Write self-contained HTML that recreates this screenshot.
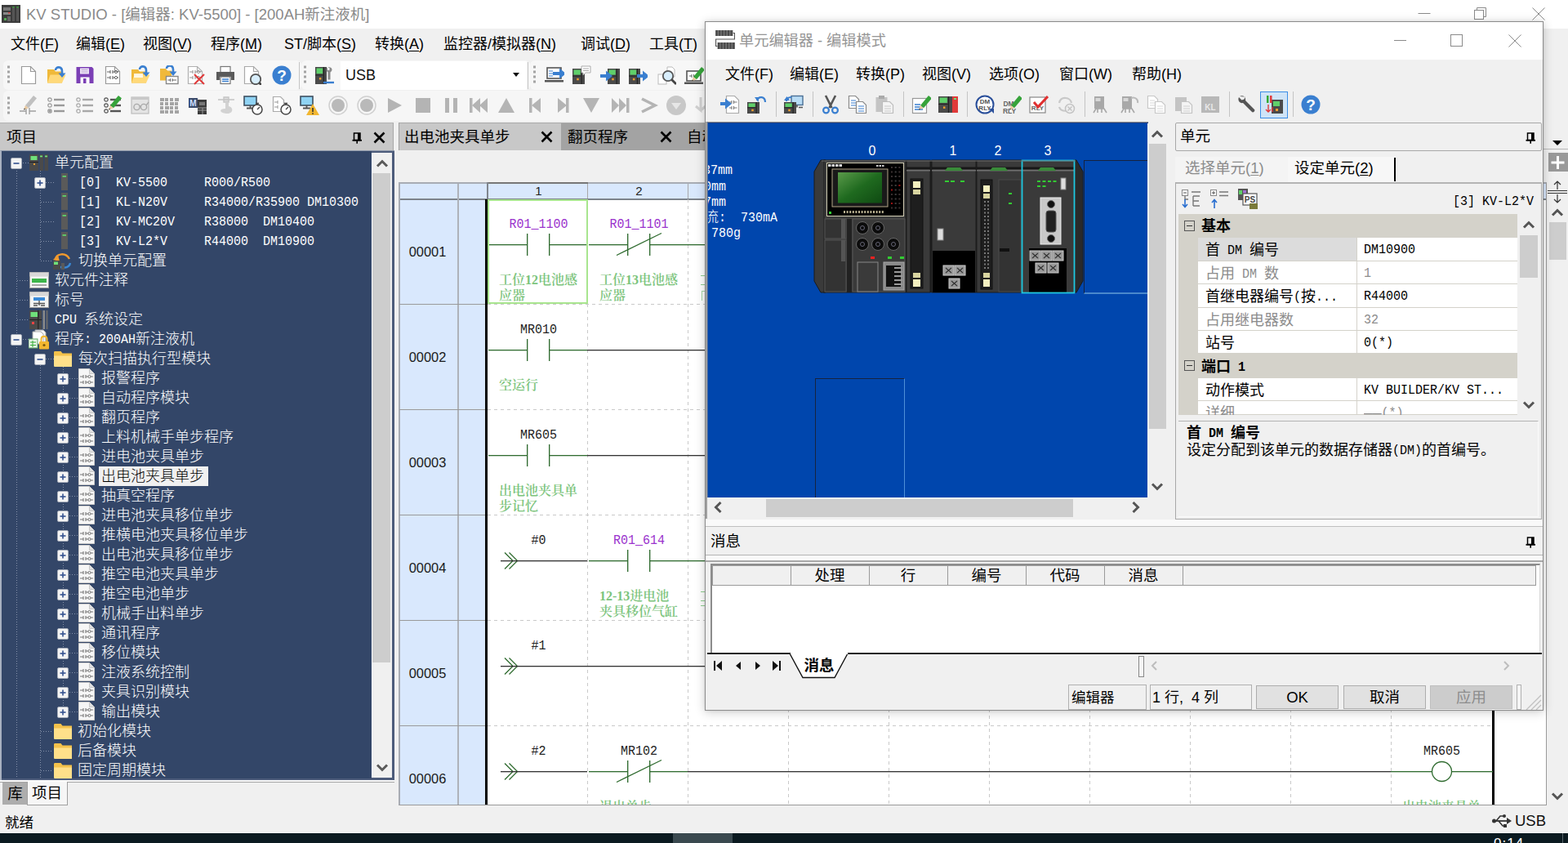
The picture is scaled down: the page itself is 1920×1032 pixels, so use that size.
<!DOCTYPE html>
<html lang="zh-CN"><head><meta charset="utf-8"><title>KV STUDIO</title>
<style>
html,body{margin:0;padding:0;}
body{width:1920px;height:1032px;overflow:hidden;background:#f0f0f0;position:relative;font-family:'Liberation Sans','Noto Sans CJK SC',sans-serif;font-size:18px;}
div,svg{position:absolute;box-sizing:border-box;}
span{white-space:pre;}
.lm{font-family:"Liberation Mono",monospace;font-weight:400;display:inline-block;transform:translateY(1px) scaleY(1.1);transform-origin:50% 62%;}
b .lm,.bd .lm{font-weight:700;}
.cj{position:relative;top:2px;}
.sg{font-family:'Liberation Mono','Noto Sans CJK SC',monospace;}
u{text-decoration:underline;text-underline-offset:2px;}
.tt{font-family:'Liberation Mono','Noto Sans CJK SC',monospace;font-size:18px;line-height:24px;color:#fff;white-space:pre;font-weight:300;}
.pt{font-family:'Liberation Mono','Noto Sans CJK SC',monospace;font-size:18px;white-space:pre;}
.dv{font-family:'Liberation Mono','Noto Sans CJK SC',monospace;font-size:18px;line-height:24px;text-align:center;white-space:pre;}
.cm{font-family:'Liberation Serif','Noto Serif CJK SC',serif;font-size:16px;line-height:18.500px;color:#7cc47c;font-weight:600;white-space:pre;}
</style></head>
<body>
<div style="left:0px;top:0px;width:1920px;height:35px;background:#fff;"></div>
<svg style="left:2px;top:6px;" width="23" height="22" viewBox="0 0 23 22"><rect x="0" y="0" width="23" height="22" fill="#3c3c3c"/><rect x="2" y="3" width="9" height="4" fill="#777"/><rect x="2" y="9" width="9" height="3" fill="#888"/><rect x="13" y="2" width="3" height="18" fill="#555"/><rect x="18" y="2" width="3" height="18" fill="#555"/><rect x="13.500" y="2" width="2" height="1.500" fill="#3a3"/><rect x="18.500" y="2" width="2" height="1.500" fill="#3a3"/><rect x="8" y="9" width="2.500" height="1.500" fill="#c44"/><rect x="3" y="16" width="3" height="3" fill="#5a5"/><rect x="7" y="14" width="4" height="6" fill="#666"/></svg>
<div style="left:32px;top:0px;height:35px;font-size:18.5px;line-height:35px;color:#8a8a8a;white-space:pre;">KV STUDIO - [编辑器: KV-5500] - [200AH新注液机]</div>
<svg style="left:1736px;top:8px;" width="160" height="18" viewBox="0 0 160 18"><g fill="none" stroke="#8a8a8a" stroke-width="1"><path d="M0.5 8.5h15"/><rect x="69.5" y="4.500" width="11" height="11"/><path d="M72.500 4.500v-3h11v11h-3"/><path d="M140.500 1.500l15 15M155.500 1.500l-15 15"/></g></svg>
<div style="left:0px;top:35px;width:1920px;height:38px;background:#f0f0f0;"></div>
<div style="left:13px;top:35px;height:38px;font-size:18px;line-height:38px;color:#000;white-space:pre;">文件(<u>F</u>)</div>
<div style="left:93px;top:35px;height:38px;font-size:18px;line-height:38px;color:#000;white-space:pre;">编辑(<u>E</u>)</div>
<div style="left:175px;top:35px;height:38px;font-size:18px;line-height:38px;color:#000;white-space:pre;">视图(<u>V</u>)</div>
<div style="left:258px;top:35px;height:38px;font-size:18px;line-height:38px;color:#000;white-space:pre;">程序(<u>M</u>)</div>
<div style="left:348px;top:35px;height:38px;font-size:18px;line-height:38px;color:#000;white-space:pre;">ST/脚本(<u>S</u>)</div>
<div style="left:459px;top:35px;height:38px;font-size:18px;line-height:38px;color:#000;white-space:pre;">转换(<u>A</u>)</div>
<div style="left:543px;top:35px;height:38px;font-size:18px;line-height:38px;color:#000;white-space:pre;">监控器/模拟器(<u>N</u>)</div>
<div style="left:711px;top:35px;height:38px;font-size:18px;line-height:38px;color:#000;white-space:pre;">调试(<u>D</u>)</div>
<div style="left:795px;top:35px;height:38px;font-size:18px;line-height:38px;color:#000;white-space:pre;">工具(<u>T</u>)</div>
<div style="left:4px;top:74px;width:365px;height:36px;background:#f7f7f7;border-radius:6px;"></div>
<div style="left:369px;top:74px;width:280px;height:36px;background:#f7f7f7;border-radius:6px;"></div>
<div style="left:649px;top:74px;width:700px;height:36px;background:#f7f7f7;border-radius:6px;"></div>
<div style="left:4px;top:111px;width:1200px;height:37px;background:#f6f6f6;border-radius:6px;"></div>
<svg style="left:9px;top:80px;" width="4" height="22" viewBox="0 0 4 22"><rect x="0" y="0.5" width="3" height="3" fill="#a4a4a4"/><rect x="0" y="6.5" width="3" height="3" fill="#a4a4a4"/><rect x="0" y="12.5" width="3" height="3" fill="#a4a4a4"/><rect x="0" y="18.5" width="3" height="3" fill="#a4a4a4"/></svg>
<svg style="left:372px;top:80px;" width="4" height="22" viewBox="0 0 4 22"><rect x="0" y="0.5" width="3" height="3" fill="#a4a4a4"/><rect x="0" y="6.5" width="3" height="3" fill="#a4a4a4"/><rect x="0" y="12.5" width="3" height="3" fill="#a4a4a4"/><rect x="0" y="18.5" width="3" height="3" fill="#a4a4a4"/></svg>
<svg style="left:653px;top:80px;" width="4" height="22" viewBox="0 0 4 22"><rect x="0" y="0.5" width="3" height="3" fill="#a4a4a4"/><rect x="0" y="6.5" width="3" height="3" fill="#a4a4a4"/><rect x="0" y="12.5" width="3" height="3" fill="#a4a4a4"/><rect x="0" y="18.5" width="3" height="3" fill="#a4a4a4"/></svg>
<svg style="left:9px;top:118px;" width="4" height="22" viewBox="0 0 4 22"><rect x="0" y="0.5" width="3" height="3" fill="#a4a4a4"/><rect x="0" y="6.5" width="3" height="3" fill="#a4a4a4"/><rect x="0" y="12.5" width="3" height="3" fill="#a4a4a4"/><rect x="0" y="18.5" width="3" height="3" fill="#a4a4a4"/></svg>
<div style="left:366px;top:76px;width:1px;height:33px;background:#c4c4c4;"></div>
<div style="left:646px;top:76px;width:1px;height:33px;background:#c4c4c4;"></div>
<svg style="left:23px;top:80px;" width="24" height="24" viewBox="0 0 24 24"><path d="M3.500 1.500h11l6 6v15h-17z" fill="#fff" stroke="#9a9a9a" stroke-width="1.200"/><path d="M14.500 1.500v6h6" fill="none" stroke="#9a9a9a" stroke-width="1.200"/></svg>
<svg style="left:57px;top:80px;" width="24" height="24" viewBox="0 0 24 24"><path d="M1 5h8l2 2.500h8v14h-18z" fill="#f0b93a"/><path d="M1 21.500l3.500-10h19l-4.500 10z" fill="#ffd97a"/><g transform="translate(0,-1)"><path d="M11 7c0-5 8-5 8 1v4" fill="none" stroke="#3a7fd0" stroke-width="2.600"/><path d="M14.500 10.500h9l-4.500 5.500z" fill="#3a7fd0"/></g></svg>
<svg style="left:92px;top:80px;" width="24" height="24" viewBox="0 0 24 24"><path d="M1.500 2h19l2 2v18h-21z" fill="#7b3fb5"/><rect x="6" y="3.500" width="11" height="7" fill="#efe6f7"/><rect x="6.500" y="14.500" width="11" height="7.500" fill="#fff"/><rect x="10" y="16" width="3.500" height="6" fill="#7b3fb5"/><path d="M7.500 5.500h8M7.500 8h8" stroke="#b9a3d0" stroke-width="1"/></svg>
<svg style="left:126px;top:80px;" width="24" height="24" viewBox="0 0 24 24"><path d="M3.500 1.500h11l6 6v15h-17z" fill="#fff" stroke="#9a9a9a" stroke-width="1.200"/><path d="M14.500 1.500v6h6" fill="none" stroke="#9a9a9a" stroke-width="1.200"/><path d="M5 8h4M9 6v4M12 6v4M12 8h3M17 8h2" stroke="#666" stroke-width="1.100" fill="none"/><circle cx="16" cy="8" r="1.600" fill="none" stroke="#666" stroke-width="1"/><path d="M5 15h4M9 13v4M12 13v4M12 15h3M17 15h2" stroke="#666" stroke-width="1.100" fill="none"/><circle cx="16" cy="15" r="1.600" fill="none" stroke="#666" stroke-width="1"/></svg>
<svg style="left:160px;top:80px;" width="24" height="24" viewBox="0 0 24 24"><path d="M1 5h8l2 2.500h8v14h-18z" fill="#f0b93a"/><path d="M1 21.500l3.500-10h19l-4.500 10z" fill="#ffd97a"/><g transform="translate(0,-2)"><path d="M11 7c0-5 8-5 8 1v4" fill="none" stroke="#3a7fd0" stroke-width="2.600"/><path d="M14.500 10.500h9l-4.500 5.500z" fill="#3a7fd0"/></g><rect x="4" y="10" width="11" height="5" fill="#fff" opacity=".8"/></svg>
<svg style="left:195px;top:80px;" width="24" height="24" viewBox="0 0 24 24"><path d="M1 4h7l2 2.500h5v12h-14z" fill="#f0b93a"/><g transform="translate(-2,-3)"><path d="M11 7c0-5 8-5 8 1v4" fill="none" stroke="#3a7fd0" stroke-width="2.600"/><path d="M14.500 10.500h9l-4.500 5.500z" fill="#3a7fd0"/></g><rect x="8.500" y="13.500" width="14.500" height="9" fill="#fff" stroke="#888" stroke-width="1.400"/><path d="M10.500 18h3M13.500 16.200v3.600M16 16.200v3.600M16 18h5" stroke="#666" stroke-width="1" fill="none"/></svg>
<svg style="left:227px;top:80px;" width="24" height="24" viewBox="0 0 24 24"><path d="M3.500 1.500h11l6 6v15h-17z" fill="#fff" stroke="#b0b0b0" stroke-width="1.200"/><path d="M14.500 1.500v6h6" fill="none" stroke="#b0b0b0" stroke-width="1.200"/><path d="M5 8h4M9 6v4M12 6v4M12 8h3M17 8h2" stroke="#999" stroke-width="1.100" fill="none"/><circle cx="16" cy="8" r="1.600" fill="none" stroke="#999" stroke-width="1"/><path d="M5 15h4M9 13v4M12 13v4M12 15h3M17 15h2" stroke="#999" stroke-width="1.100" fill="none"/><circle cx="16" cy="15" r="1.600" fill="none" stroke="#999" stroke-width="1"/><path d="M11 11l12 12M23 11l-12 12" stroke="#e03a3a" stroke-width="2"/></svg>
<svg style="left:264px;top:80px;" width="24" height="24" viewBox="0 0 24 24"><rect x="6" y="1.500" width="12" height="7" fill="#fff" stroke="#777" stroke-width="1.200"/><path d="M1 8h22v10h-4v-4h-14v4h-4z" fill="#5a5a5a"/><rect x="6" y="14" width="12" height="8.500" fill="#fff" stroke="#777" stroke-width="1.200"/><path d="M8 17h8M8 19.500h8" stroke="#3a7fd0" stroke-width="1.400"/></svg>
<svg style="left:296px;top:80px;" width="24" height="24" viewBox="0 0 24 24"><path d="M3.500 1.500h11l6 6v15h-17z" fill="#fff" stroke="#aaa" stroke-width="1.200"/><path d="M14.500 1.500v6h6" fill="none" stroke="#aaa" stroke-width="1.200"/><g transform="translate(8,8)"><circle cx="9" cy="9" r="6.200" fill="#d8eefc" stroke="#555" stroke-width="1.800"/><path d="M13.500 13.500l5.500 5.500" stroke="#444" stroke-width="2.800"/></g></svg>
<svg style="left:333px;top:80px;" width="24" height="24" viewBox="0 0 24 24"><circle cx="12" cy="12" r="11.500" fill="#3a7fd0"/><text x="12" y="18.500" font-family="Liberation Sans,sans-serif" font-size="19" font-weight="bold" fill="#fff" text-anchor="middle">?</text></svg>
<svg style="left:386px;top:80px;" width="24" height="24" viewBox="0 0 24 24"><rect x="0" y="2" width="14" height="21" fill="#4a4a4a"/><rect x="1.5" y="3.5" width="7.700000000000001" height="6.72" fill="#5fd06a"/><rect x="9.799999999999999" y="2" width="1.200" height="21" fill="#222"/><rect x="4.8999999999999995" y="15.02" width="2.500" height="2.500" fill="#f0a030"/><rect x="0" y="11.450000000000001" width="9.799999999999999" height="1" fill="#222"/><path d="M15 3c3-2 7 1 5 4l-1.500 1.500v9h-3v-9l-1.500-1.500c-1-1.500-0.500-3 1-4v3h2.500v-3" fill="#8a8a8a"/><path d="M10 21h13" stroke="#3a7fd0" stroke-width="2.400"/></svg>
<svg style="left:667px;top:80px;" width="24" height="24" viewBox="0 0 24 24"><rect x="3" y="3" width="17" height="13" fill="#fff" stroke="#555" stroke-width="1.600"/><path d="M0 18h23v2.500h-23z" fill="#555"/><path d="M5 7h5M5 10h5M5 13h5" stroke="#3a7fd0" stroke-width="1.200"/><path d="M10 8h8v-4.500l8 6.500l-8 6.500v-4.500h-8z" fill="#3a7fd0"/></svg>
<svg style="left:700px;top:80px;" width="24" height="24" viewBox="0 0 24 24"><rect x="1" y="4" width="15" height="19" fill="#4a4a4a"/><rect x="2.5" y="5.5" width="8.25" height="6.08" fill="#5fd06a"/><rect x="11.5" y="4" width="1.200" height="19" fill="#222"/><rect x="6.25" y="15.78" width="2.500" height="2.500" fill="#f0a030"/><rect x="1" y="12.55" width="10.5" height="1" fill="#222"/><path d="M12 1h11v8h-6l-3 3v-3h-2z" fill="#fff" stroke="#aaa" stroke-width="1"/><path d="M14 4h7M14 6.500h7" stroke="#aaa" stroke-width="1"/></svg>
<svg style="left:735px;top:80px;" width="24" height="24" viewBox="0 0 24 24"><rect x="9" y="4" width="15" height="19" fill="#4a4a4a"/><rect x="10.5" y="5.5" width="8.25" height="6.08" fill="#5fd06a"/><rect x="19.5" y="4" width="1.200" height="19" fill="#222"/><rect x="14.25" y="15.78" width="2.500" height="2.500" fill="#f0a030"/><rect x="9" y="12.55" width="10.5" height="1" fill="#222"/><path d="M0 11h7v-4.500l8 6.500l-8 6.500v-4.500h-7z" fill="#3a7fd0"/></svg>
<svg style="left:769px;top:80px;" width="24" height="24" viewBox="0 0 24 24"><rect x="1" y="4" width="14" height="19" fill="#4a4a4a"/><rect x="2.5" y="5.5" width="7.700000000000001" height="6.08" fill="#5fd06a"/><rect x="10.799999999999999" y="4" width="1.200" height="19" fill="#222"/><rect x="5.8999999999999995" y="15.78" width="2.500" height="2.500" fill="#f0a030"/><rect x="1" y="12.55" width="9.799999999999999" height="1" fill="#222"/><path d="M11 11h7v-4.500l8 6.500l-8 6.500v-4.500h-7z" fill="#3a7fd0"/></svg>
<svg style="left:804px;top:80px;" width="24" height="24" viewBox="0 0 24 24"><path d="M13 2h6l3 3v9h-9z" fill="#fff" stroke="#bbb" stroke-width="1"/><rect x="2" y="11" width="10" height="12" fill="#fff" stroke="#bbb" stroke-width="1"/><g transform="translate(5,4)"><circle cx="9" cy="9" r="6.200" fill="#d8eefc" stroke="#555" stroke-width="1.800"/><path d="M13.500 13.500l5.500 5.500" stroke="#444" stroke-width="2.800"/></g></svg>
<svg style="left:838px;top:80px;" width="24" height="24" viewBox="0 0 24 24"><rect x="3" y="7" width="17" height="12" fill="#fff" stroke="#555" stroke-width="1.600"/><path d="M0 20.500h23v2.500h-23z" fill="#555"/><path d="M6 13h3M9 11v4M11.500 11v4" stroke="#666" stroke-width="1"/><g transform="translate(8,-1)"><path d="M3 15l10-12l4 3.200l-10 12z" fill="#36a33a"/><path d="M3 15l4 3.200l-6 2.300z" fill="#e8c9a0"/><path d="M1 20.500l2.200-.8l-1.400-1.200z" fill="#333"/></g></svg>
<svg style="left:23px;top:117px;" width="24" height="24" viewBox="0 0 24 24"><path d="M1 19h8M9 15v8M13 15v8M13 19h8" stroke="#a0a0a0" stroke-width="1.400" fill="none"/><g transform="translate(5,-3)"><path d="M3 15l10-12l4 3.200l-10 12z" fill="#c0c0c0"/><path d="M3 15l4 3.200l-6 2.300z" fill="#e8c9a0"/><path d="M1 20.500l2.200-.8l-1.400-1.200z" fill="#333"/></g></svg>
<svg style="left:57px;top:117px;" width="24" height="24" viewBox="0 0 24 24"><circle cx="4" cy="5" r="2.200" fill="none" stroke="#9a9a9a" stroke-width="1.200"/><rect x="9" y="3.8" width="13" height="2.400" fill="#9a9a9a"/><circle cx="4" cy="12" r="2.200" fill="none" stroke="#9a9a9a" stroke-width="1.200"/><rect x="9" y="10.8" width="13" height="2.400" fill="#9a9a9a"/><circle cx="4" cy="19" r="2.200" fill="none" stroke="#9a9a9a" stroke-width="1.200"/><rect x="9" y="17.8" width="13" height="2.400" fill="#9a9a9a"/><path d="M2 17l4 4M6 17l-4 4" stroke="#9a9a9a" stroke-width="1.200"/></svg>
<svg style="left:92px;top:117px;" width="24" height="24" viewBox="0 0 24 24"><circle cx="4" cy="5" r="2.200" fill="none" stroke="#a8a8a8" stroke-width="1.200"/><rect x="9" y="3.8" width="13" height="2.400" fill="#a8a8a8"/><circle cx="4" cy="12" r="2.200" fill="none" stroke="#a8a8a8" stroke-width="1.200"/><rect x="9" y="10.8" width="13" height="2.400" fill="#a8a8a8"/><circle cx="4" cy="19" r="2.200" fill="none" stroke="#a8a8a8" stroke-width="1.200"/><rect x="9" y="17.8" width="13" height="2.400" fill="#a8a8a8"/></svg>
<svg style="left:126px;top:117px;" width="24" height="24" viewBox="0 0 24 24"><circle cx="4" cy="5" r="2.200" fill="none" stroke="#555" stroke-width="1.200"/><rect x="9" y="3.8" width="13" height="2.400" fill="#555"/><circle cx="4" cy="12" r="2.200" fill="none" stroke="#555" stroke-width="1.200"/><rect x="9" y="10.8" width="13" height="2.400" fill="#555"/><circle cx="4" cy="19" r="2.200" fill="none" stroke="#555" stroke-width="1.200"/><rect x="9" y="17.8" width="13" height="2.400" fill="#555"/><g transform="translate(6,-3)"><path d="M3 15l10-12l4 3.200l-10 12z" fill="#36a33a"/><path d="M3 15l4 3.200l-6 2.300z" fill="#e8c9a0"/><path d="M1 20.500l2.200-.8l-1.400-1.200z" fill="#333"/></g></svg>
<svg style="left:160px;top:117px;" width="24" height="24" viewBox="0 0 24 24"><rect x="1" y="2" width="21" height="20" fill="#e4e4e4" stroke="#bdbdbd" stroke-width="1.200"/><rect x="1" y="2" width="21" height="3" fill="#c8c8c8"/><circle cx="7.500" cy="14" r="3.600" fill="none" stroke="#aaa" stroke-width="1.400"/><circle cx="16" cy="14" r="3.600" fill="none" stroke="#aaa" stroke-width="1.400"/><path d="M11 13h1.500M19 12l3-4" stroke="#aaa" stroke-width="1.300"/></svg>
<svg style="left:195px;top:117px;" width="24" height="24" viewBox="0 0 24 24"><rect x="1" y="3" width="5" height="4" fill="#a4a4a4"/><rect x="7" y="3" width="4" height="4" fill="#a4a4a4"/><rect x="13" y="3" width="4" height="4" fill="#a4a4a4"/><rect x="19" y="3" width="5" height="4" fill="#a4a4a4"/><rect x="1" y="8" width="4" height="4" fill="#a4a4a4"/><rect x="7" y="8" width="4" height="4" fill="#a4a4a4"/><rect x="13" y="8" width="5" height="4" fill="#a4a4a4"/><rect x="19" y="8" width="4" height="4" fill="#a4a4a4"/><rect x="1" y="13" width="4" height="4" fill="#a4a4a4"/><rect x="7" y="13" width="5" height="4" fill="#a4a4a4"/><rect x="13" y="13" width="4" height="4" fill="#a4a4a4"/><rect x="19" y="13" width="4" height="4" fill="#a4a4a4"/><rect x="1" y="18" width="5" height="4" fill="#a4a4a4"/><rect x="7" y="18" width="4" height="4" fill="#a4a4a4"/><rect x="13" y="18" width="4" height="4" fill="#a4a4a4"/><rect x="19" y="18" width="5" height="4" fill="#a4a4a4"/></svg>
<svg style="left:230px;top:117px;" width="24" height="24" viewBox="0 0 24 24"><rect x="1" y="3" width="11" height="12" fill="#3a4a6a"/><text x="6.500" y="13" font-family="Liberation Sans,sans-serif" font-size="10" font-weight="bold" fill="#cfe0ff" text-anchor="middle">M</text><rect x="12" y="5" width="11" height="18" fill="#3c3c3c"/><rect x="14" y="8" width="7" height="4" fill="#777"/><path d="M12 15h11M12 18h11M18 15v8" stroke="#999" stroke-width="1"/></svg>
<svg style="left:265px;top:117px;" width="24" height="24" viewBox="0 0 24 24"><path d="M2 5h20M9 2h6v6h-6z" stroke="#c4c4c4" stroke-width="1.400" fill="#ddd"/><path d="M11 8v8c-4 0-6 1-6 3c2 3 12 5 14 0c1-2 0-5-4-6v-5z" fill="#d2d2d2"/></svg>
<svg style="left:298px;top:117px;" width="24" height="24" viewBox="0 0 24 24"><rect x="1" y="1" width="15" height="11" fill="#8fd3f4" stroke="#3d4f60" stroke-width="1.600"/><path d="M8.500 12v3M4 15.500h9" stroke="#555" stroke-width="1.800"/><g transform="translate(10,8)"><circle cx="7" cy="9" r="6" fill="#fff" stroke="#444" stroke-width="1.500"/><path d="M7 9l3-3M5 1.500h4M7 1.500v2" stroke="#444" stroke-width="1.400" fill="none"/></g></svg>
<svg style="left:333px;top:117px;" width="24" height="24" viewBox="0 0 24 24"><path d="M1.500 1.500h9l4 4v14h-13z" fill="#fff" stroke="#aaa" stroke-width="1.200"/><path d="M3 8h4M7 6v4M3 14h4M7 12v4" stroke="#999" stroke-width="1"/><g transform="translate(10,8)"><circle cx="7" cy="9" r="6" fill="#fff" stroke="#444" stroke-width="1.500"/><path d="M7 9l3-3M5 1.500h4M7 1.500v2" stroke="#444" stroke-width="1.400" fill="none"/></g></svg>
<svg style="left:367px;top:117px;" width="24" height="24" viewBox="0 0 24 24"><rect x="1" y="1" width="15" height="11" fill="#8fd3f4" stroke="#3d4f60" stroke-width="1.600"/><path d="M8.500 12v3M4 15.500h9" stroke="#555" stroke-width="1.800"/><g transform="translate(8,10)"><path d="M8 0l8 14h-16z" fill="#f2b731"/><path d="M8 5v5M8 11.200v1.600" stroke="#333" stroke-width="1.600"/></g></svg>
<svg style="left:402px;top:117px;" width="24" height="24" viewBox="0 0 24 24"><circle cx="12" cy="12" r="11" fill="none" stroke="#d0d0d0" stroke-width="1.500"/><circle cx="12" cy="12" r="8" fill="#b9b9b9"/></svg>
<svg style="left:437px;top:117px;" width="24" height="24" viewBox="0 0 24 24"><circle cx="12" cy="12" r="11" fill="none" stroke="#d0d0d0" stroke-width="1.500"/><circle cx="12" cy="12" r="8" fill="#b9b9b9"/></svg>
<svg style="left:472px;top:117px;" width="24" height="24" viewBox="0 0 24 24"><path d="M3 3l17 9l-17 9z" fill="#b4b4b4"/></svg>
<svg style="left:506px;top:117px;" width="24" height="24" viewBox="0 0 24 24"><rect x="3" y="3" width="18" height="18" fill="#b4b4b4"/></svg>
<svg style="left:541px;top:117px;" width="24" height="24" viewBox="0 0 24 24"><rect x="4" y="3" width="5" height="18" fill="#b4b4b4"/><rect x="14" y="3" width="5" height="18" fill="#b4b4b4"/></svg>
<svg style="left:574px;top:117px;" width="24" height="24" viewBox="0 0 24 24"><rect x="1" y="3" width="3.500" height="18" fill="#b4b4b4"/><path d="M14 3v18l-10-9zM23 3v18l-10-9z" fill="#b4b4b4"/></svg>
<svg style="left:608px;top:117px;" width="24" height="24" viewBox="0 0 24 24"><path d="M12 3l10 18h-20z" fill="#b4b4b4"/></svg>
<svg style="left:645px;top:117px;" width="24" height="24" viewBox="0 0 24 24"><rect x="3" y="3" width="3.500" height="18" fill="#b4b4b4"/><path d="M17 3v18l-11-9z" fill="#b4b4b4"/></svg>
<svg style="left:679px;top:117px;" width="24" height="24" viewBox="0 0 24 24"><rect x="14" y="3" width="3.500" height="18" fill="#b4b4b4"/><path d="M4 3v18l11-9z" fill="#b4b4b4"/></svg>
<svg style="left:712px;top:117px;" width="24" height="24" viewBox="0 0 24 24"><path d="M12 21l10-18h-20z" fill="#b4b4b4"/></svg>
<svg style="left:747px;top:117px;" width="24" height="24" viewBox="0 0 24 24"><rect x="20" y="3" width="3.500" height="18" fill="#b4b4b4"/><path d="M2 3v18l9-9zM11 3v18l9-9z" fill="#b4b4b4"/></svg>
<svg style="left:782px;top:117px;" width="24" height="24" viewBox="0 0 24 24"><path d="M4 4l16 8l-16 8" fill="none" stroke="#b4b4b4" stroke-width="3.600"/></svg>
<svg style="left:816px;top:117px;" width="24" height="24" viewBox="0 0 24 24"><circle cx="12" cy="12" r="12" fill="#c8c8c8"/><path d="M6 9h12l-6 8z" fill="#e6e6e6"/></svg>
<svg style="left:850px;top:117px;" width="24" height="24" viewBox="0 0 24 24"><path d="M8 2v16l-6-5M8 18l6-5" stroke="#d0d0d0" stroke-width="3" fill="none"/></svg>
<div style="left:417px;top:75px;width:228px;height:35px;background:#fff;"></div>
<div style="left:423px;top:75px;height:35px;font-size:18px;line-height:35px;color:#111;white-space:pre;">USB</div>
<svg style="left:628px;top:89px;" width="10" height="6" viewBox="0 0 10 6"><path d="M0 0h8l-4 5z" fill="#111"/></svg>
<div style="left:0px;top:150px;width:482px;height:34px;background:#c8c8c8;border-top:1px solid #b4b4b4;border-right:1px solid #a8a8a8;"></div>
<div style="left:8px;top:151px;height:34px;font-size:18.5px;line-height:34px;color:#000;white-space:pre;">项目</div>
<svg style="left:431px;top:162px;" width="13" height="14" viewBox="0 0 13 14"><path d="M2.500 1h7.500v8.500h-7.500z" fill="none" stroke="#000" stroke-width="1.500"/><rect x="7" y="1" width="3" height="8.500" fill="#000"/><path d="M0.500 9.800h11.500" stroke="#000" stroke-width="1.800"/><path d="M6.200 10v3.800" stroke="#000" stroke-width="1.600"/></svg>
<svg style="left:457px;top:161px;" width="15" height="15" viewBox="0 0 15 15"><path d="M1.500 1.500l12 12M13.500 1.500l-12 12" stroke="#000" stroke-width="2.600" fill="none"/></svg>
<div style="left:0px;top:184px;width:483px;height:771px;background:#4d5c7b;border-left:2px solid #a8b0c0;border-top:1px solid #8d97aa;"></div>
<div class="tree" style="left:2px;top:185px;width:453px;height:768px;background:#334668;overflow:hidden;"></div>
<div style="left:455px;top:187px;width:25px;height:765px;background:#f0f0f0;border-left:1px solid #fafcff;"></div>
<div style="left:456px;top:212px;width:22px;height:599px;background:#cdcdcd;"></div>
<svg style="left:460px;top:195px;" width="16" height="10" viewBox="0 0 16 10"><path d="M2 8.500l6-6l6 6" stroke="#5a5a5a" stroke-width="3" fill="none"/></svg>
<svg style="left:460px;top:935px;" width="16" height="10" viewBox="0 0 16 10"><path d="M2 1.500l6 6l6-6" stroke="#5a5a5a" stroke-width="3" fill="none"/></svg>
<div style="left:0px;top:955px;width:483px;height:2px;background:#fafafa;"></div>
<div style="left:0px;top:957px;width:483px;height:1px;background:#a4a4a4;"></div>
<div style="left:3px;top:958px;width:31px;height:27px;background:#adadad;"></div>
<div style="left:3px;top:958px;height:27px;font-size:18.5px;line-height:27px;color:#000;white-space:pre;width:31px;text-align:center;">库</div>
<div style="left:33px;top:957px;width:50px;height:29px;background:#f6f6f6;border:1px solid #a0a0a0;border-top:none;"></div>
<div style="left:33px;top:957px;height:28px;font-size:18.5px;line-height:28px;color:#000;white-space:pre;width:49px;text-align:center;">项目</div>
<div style="left:0px;top:986px;width:1920px;height:34px;background:#f0f0f0;"></div>
<div style="left:6px;top:992px;height:32px;font-size:17.5px;line-height:32px;color:#000;white-space:pre;font-family:'Liberation Mono','Noto Sans CJK SC',monospace;">就绪</div>
<svg style="left:1826px;top:995px;" width="26" height="20" viewBox="0 0 26 20"><g fill="#333" stroke="#333"><path d="M2 10h20" stroke-width="1.800" fill="none"/><path d="M19 6l6 4l-6 4z" stroke="none"/><circle cx="3.500" cy="10" r="2.500" stroke="none"/><path d="M6 10l5-6h5" fill="none" stroke-width="1.600"/><circle cx="16" cy="4" r="2" stroke="none"/><path d="M9 10l5 6h3" fill="none" stroke-width="1.600"/><rect x="15" y="14" width="4" height="4" stroke="none"/></g></svg>
<div style="left:1855px;top:988px;height:34px;font-size:18.5px;line-height:34px;color:#111;white-space:pre;">USB</div>
<div style="left:0px;top:1019px;width:1920px;height:1px;background:#fcfcfc;"></div>
<div style="left:0px;top:1020px;width:1920px;height:12px;background:#0b1a20;"></div>
<div style="left:824px;top:1020px;width:73px;height:12px;background:#3a494f;"></div>
<div style="left:1913px;top:1020px;width:1px;height:12px;background:#5a666c;"></div>
<div style="left:1829px;top:1022px;height:22px;font-size:17px;line-height:22px;color:#fff;white-space:pre;letter-spacing:1px;">0:14</div>
<div style="left:20px;top:206px;width:1px;height:749px;background:repeating-linear-gradient(180deg,#8490a8 0 1px,transparent 1px 3px);"></div>
<div style="left:49px;top:206px;width:1px;height:114px;background:repeating-linear-gradient(180deg,#8490a8 0 1px,transparent 1px 3px);"></div>
<div style="left:56px;top:223px;width:10px;height:1px;background:repeating-linear-gradient(90deg,#8490a8 0 1px,transparent 1px 3px);"></div>
<div style="left:50px;top:247px;width:16px;height:1px;background:repeating-linear-gradient(90deg,#8490a8 0 1px,transparent 1px 3px);"></div>
<div style="left:50px;top:271px;width:16px;height:1px;background:repeating-linear-gradient(90deg,#8490a8 0 1px,transparent 1px 3px);"></div>
<div style="left:50px;top:295px;width:16px;height:1px;background:repeating-linear-gradient(90deg,#8490a8 0 1px,transparent 1px 3px);"></div>
<div style="left:50px;top:319px;width:14px;height:1px;background:repeating-linear-gradient(90deg,#8490a8 0 1px,transparent 1px 3px);"></div>
<div style="left:21px;top:343px;width:14px;height:1px;background:repeating-linear-gradient(90deg,#8490a8 0 1px,transparent 1px 3px);"></div>
<div style="left:21px;top:367px;width:14px;height:1px;background:repeating-linear-gradient(90deg,#8490a8 0 1px,transparent 1px 3px);"></div>
<div style="left:21px;top:391px;width:14px;height:1px;background:repeating-linear-gradient(90deg,#8490a8 0 1px,transparent 1px 3px);"></div>
<div style="left:28px;top:199px;width:8px;height:1px;background:repeating-linear-gradient(90deg,#8490a8 0 1px,transparent 1px 3px);"></div>
<div style="left:28px;top:415px;width:8px;height:1px;background:repeating-linear-gradient(90deg,#8490a8 0 1px,transparent 1px 3px);"></div>
<div style="left:49px;top:447px;width:1px;height:508px;background:repeating-linear-gradient(180deg,#8490a8 0 1px,transparent 1px 3px);"></div>
<div style="left:56px;top:439px;width:10px;height:1px;background:repeating-linear-gradient(90deg,#8490a8 0 1px,transparent 1px 3px);"></div>
<div style="left:77px;top:449px;width:1px;height:422px;background:repeating-linear-gradient(180deg,#8490a8 0 1px,transparent 1px 3px);"></div>
<div style="left:85px;top:463px;width:10px;height:1px;background:repeating-linear-gradient(90deg,#8490a8 0 1px,transparent 1px 3px);"></div>
<div style="left:85px;top:487px;width:10px;height:1px;background:repeating-linear-gradient(90deg,#8490a8 0 1px,transparent 1px 3px);"></div>
<div style="left:85px;top:511px;width:10px;height:1px;background:repeating-linear-gradient(90deg,#8490a8 0 1px,transparent 1px 3px);"></div>
<div style="left:85px;top:535px;width:10px;height:1px;background:repeating-linear-gradient(90deg,#8490a8 0 1px,transparent 1px 3px);"></div>
<div style="left:85px;top:559px;width:10px;height:1px;background:repeating-linear-gradient(90deg,#8490a8 0 1px,transparent 1px 3px);"></div>
<div style="left:85px;top:583px;width:10px;height:1px;background:repeating-linear-gradient(90deg,#8490a8 0 1px,transparent 1px 3px);"></div>
<div style="left:85px;top:607px;width:10px;height:1px;background:repeating-linear-gradient(90deg,#8490a8 0 1px,transparent 1px 3px);"></div>
<div style="left:85px;top:631px;width:10px;height:1px;background:repeating-linear-gradient(90deg,#8490a8 0 1px,transparent 1px 3px);"></div>
<div style="left:85px;top:655px;width:10px;height:1px;background:repeating-linear-gradient(90deg,#8490a8 0 1px,transparent 1px 3px);"></div>
<div style="left:85px;top:679px;width:10px;height:1px;background:repeating-linear-gradient(90deg,#8490a8 0 1px,transparent 1px 3px);"></div>
<div style="left:85px;top:703px;width:10px;height:1px;background:repeating-linear-gradient(90deg,#8490a8 0 1px,transparent 1px 3px);"></div>
<div style="left:85px;top:727px;width:10px;height:1px;background:repeating-linear-gradient(90deg,#8490a8 0 1px,transparent 1px 3px);"></div>
<div style="left:85px;top:751px;width:10px;height:1px;background:repeating-linear-gradient(90deg,#8490a8 0 1px,transparent 1px 3px);"></div>
<div style="left:85px;top:775px;width:10px;height:1px;background:repeating-linear-gradient(90deg,#8490a8 0 1px,transparent 1px 3px);"></div>
<div style="left:85px;top:799px;width:10px;height:1px;background:repeating-linear-gradient(90deg,#8490a8 0 1px,transparent 1px 3px);"></div>
<div style="left:85px;top:823px;width:10px;height:1px;background:repeating-linear-gradient(90deg,#8490a8 0 1px,transparent 1px 3px);"></div>
<div style="left:85px;top:847px;width:10px;height:1px;background:repeating-linear-gradient(90deg,#8490a8 0 1px,transparent 1px 3px);"></div>
<div style="left:85px;top:871px;width:10px;height:1px;background:repeating-linear-gradient(90deg,#8490a8 0 1px,transparent 1px 3px);"></div>
<div style="left:50px;top:895px;width:15px;height:1px;background:repeating-linear-gradient(90deg,#8490a8 0 1px,transparent 1px 3px);"></div>
<div style="left:50px;top:919px;width:15px;height:1px;background:repeating-linear-gradient(90deg,#8490a8 0 1px,transparent 1px 3px);"></div>
<div style="left:50px;top:943px;width:15px;height:1px;background:repeating-linear-gradient(90deg,#8490a8 0 1px,transparent 1px 3px);"></div>
<svg style="left:13px;top:193px;" width="14" height="14" viewBox="0 0 14 14"><rect x="0.500" y="0.500" width="13" height="13" rx="1.500" fill="#f4f4f4" stroke="#a6adba" stroke-width="1"/><path d="M3.500 7h7" stroke="#33508f" stroke-width="1.600"/></svg>
<svg style="left:36px;top:188px;" width="24" height="22" viewBox="0 0 24 22"><rect x="0" y="1" width="11" height="20" fill="#4a4a4a"/><rect x="1.500" y="3" width="8" height="5" fill="#6fe07a"/><rect x="5" y="12" width="2" height="2" fill="#f0a030"/><rect x="0" y="10" width="11" height="1" fill="#222"/><rect x="12.500" y="1" width="4.500" height="20" fill="#4a4a4a"/><rect x="18.500" y="1" width="4.500" height="20" fill="#4a4a4a"/><rect x="13" y="2.500" width="3" height="1.800" fill="#6fe07a"/><rect x="19" y="2.500" width="3" height="1.800" fill="#6fe07a"/></svg>
<div class="tt" style="left:67px;top:186px;"><span class="cj">单元配置</span></div>
<svg style="left:42px;top:217px;" width="14" height="14" viewBox="0 0 14 14"><rect x="0.500" y="0.500" width="13" height="13" rx="1.500" fill="#f4f4f4" stroke="#a6adba" stroke-width="1"/><path d="M3.500 7h7" stroke="#33508f" stroke-width="1.600"/><path d="M7 3.500v7" stroke="#33508f" stroke-width="1.600"/></svg>
<svg style="left:75px;top:212px;" width="8" height="22" viewBox="0 0 8 22"><rect x="0" y="0" width="8" height="21" fill="#5a5a5a"/><rect x="1.500" y="3" width="4.500" height="1.800" fill="#5fd06a"/></svg>
<div class="tt" style="left:97px;top:210px;"><span class="lm" style="font-size:15.0px">[0]  KV-5500     R000/R500</span></div>
<svg style="left:75px;top:236px;" width="8" height="22" viewBox="0 0 8 22"><rect x="0" y="0" width="8" height="21" fill="#5a5a5a"/><rect x="1.500" y="3" width="4.500" height="1.800" fill="#5fd06a"/></svg>
<div class="tt" style="left:97px;top:234px;"><span class="lm" style="font-size:15.0px">[1]  KL-N20V     R34000/R35900 DM10300</span></div>
<svg style="left:75px;top:260px;" width="8" height="22" viewBox="0 0 8 22"><rect x="0" y="0" width="8" height="21" fill="#5a5a5a"/><rect x="1.500" y="3" width="4.500" height="1.800" fill="#5fd06a"/></svg>
<div class="tt" style="left:97px;top:258px;"><span class="lm" style="font-size:15.0px">[2]  KV-MC20V    R38000  DM10400</span></div>
<svg style="left:75px;top:284px;" width="8" height="22" viewBox="0 0 8 22"><rect x="0" y="0" width="8" height="21" fill="#5a5a5a"/><rect x="1.500" y="3" width="4.500" height="1.800" fill="#5fd06a"/></svg>
<div class="tt" style="left:97px;top:282px;"><span class="lm" style="font-size:15.0px">[3]  KV-L2*V     R44000  DM10900</span></div>
<svg style="left:64px;top:308px;" width="26" height="24" viewBox="0 0 26 24"><path d="M4 9c1-6 12-9 17 0" fill="none" stroke="#f29a2e" stroke-width="2.400"/><path d="M1 10l6-6l2 8z" fill="#f29a2e"/><path d="M22 14c-1 6-12 9-17 0" fill="none" stroke="#3a8ad8" stroke-width="2.400"/><rect x="1" y="11" width="9" height="11" fill="#4a4a4a"/><rect x="2" y="12.500" width="5" height="3.500" fill="#6fe07a"/><rect x="11" y="14" width="4" height="8" fill="#5a5a5a"/></svg>
<div class="tt" style="left:96px;top:306px;"><span class="cj">切换单元配置</span></div>
<svg style="left:36px;top:333px;" width="24" height="22" viewBox="0 0 24 22"><rect x="0.500" y="0.500" width="23" height="19" fill="#f4f4f4" stroke="#9a9a9a"/><rect x="0.500" y="0.500" width="23" height="5" fill="#d8d8d8"/><rect x="3" y="8" width="18" height="5" fill="#3cb54a"/><path d="M3 16h18" stroke="#888" stroke-width="1.400"/></svg>
<div class="tt" style="left:67px;top:330px;"><span class="cj">软元件注释</span></div>
<svg style="left:36px;top:357px;" width="24" height="22" viewBox="0 0 24 22"><rect x="0.500" y="0.500" width="23" height="19" fill="#f4f4f4" stroke="#9a9a9a"/><rect x="0.500" y="0.500" width="23" height="5" fill="#d8d8d8"/><rect x="5" y="7" width="14" height="4" fill="#3a8ad8"/><path d="M12 11v6M5 14.500h14M5 17h5M14 17h5" stroke="#555" stroke-width="1.400" fill="none"/></svg>
<div class="tt" style="left:67px;top:354px;"><span class="cj">标号</span></div>
<svg style="left:36px;top:380px;" width="24" height="23" viewBox="0 0 24 23"><rect x="0" y="0" width="15" height="23" fill="#4a4a4a"/><rect x="1.500" y="2" width="9" height="6" fill="#6fe07a"/><rect x="0" y="11" width="15" height="1" fill="#222"/><rect x="3" y="14" width="3" height="3" fill="#e44"/><rect x="16.500" y="0" width="2.500" height="23" fill="#8a8a8a"/><rect x="20.500" y="0" width="2" height="23" fill="#6a6a6a"/><rect x="10" y="0" width="1.500" height="23" fill="#2a2a2a"/></svg>
<div class="tt" style="left:67px;top:378px;"><span class="lm" style="font-size:15.0px">CPU </span><span class="cj">系统设定</span></div>
<svg style="left:13px;top:409px;" width="14" height="14" viewBox="0 0 14 14"><rect x="0.500" y="0.500" width="13" height="13" rx="1.500" fill="#f4f4f4" stroke="#a6adba" stroke-width="1"/><path d="M3.500 7h7" stroke="#33508f" stroke-width="1.600"/></svg>
<svg style="left:35px;top:403px;" width="26" height="25" viewBox="0 0 26 25"><path d="M8 1h10l3 3v12h-13z" fill="#f4f4f4" stroke="#aaa"/><path d="M5 3h10l3 3v12h-13z" fill="#fff" stroke="#aaa"/><rect x="0" y="12" width="11" height="11" fill="#e8f4e8" stroke="#6a6"/><path d="M2 16h7M2 19.500h7M5 14v8" stroke="#3a3" stroke-width="1"/><rect x="13" y="15" width="12" height="9.500" rx="1" fill="#f2b731"/><path d="M15.500 15v-3c0-4.500 7-4.500 7 0v3" fill="none" stroke="#f2b731" stroke-width="2"/><circle cx="19" cy="19.500" r="1.600" fill="#7a5a10"/></svg>
<div class="tt" style="left:67px;top:402px;"><span class="cj">程序</span><span class="lm" style="font-size:15.0px">: 200AH</span><span class="cj">新注液机</span></div>
<svg style="left:42px;top:433px;" width="14" height="14" viewBox="0 0 14 14"><rect x="0.500" y="0.500" width="13" height="13" rx="1.500" fill="#f4f4f4" stroke="#a6adba" stroke-width="1"/><path d="M3.500 7h7" stroke="#33508f" stroke-width="1.600"/></svg>
<svg style="left:66px;top:429px;" width="22" height="20" viewBox="0 0 22 20"><path d="M0 2.500c0-1 .5-1.500 1.500-1.500h7l2 2.500h11c1 0 1.500.5 1.500 1.500v14h-23z" fill="#f3c14b"/><path d="M0 6.500h23v12c0 1-.5 1.500-1.500 1.500h-20c-1 0-1.500-.5-1.500-1.500z" fill="#ffe08a"/></svg>
<div class="tt" style="left:96px;top:426px;"><span class="cj">每次扫描执行型模块</span></div>
<svg style="left:70px;top:457px;" width="14" height="14" viewBox="0 0 14 14"><rect x="0.500" y="0.500" width="13" height="13" rx="1.500" fill="#f4f4f4" stroke="#a6adba" stroke-width="1"/><path d="M3.500 7h7" stroke="#33508f" stroke-width="1.600"/><path d="M7 3.500v7" stroke="#33508f" stroke-width="1.600"/></svg>
<svg style="left:96px;top:451px;" width="20" height="23" viewBox="0 0 20 23"><path d="M0.500 0.500h13l6 6v16h-19z" fill="#f6f6f6" stroke="#c8c8c8"/><path d="M13.500 0.500v6h6" fill="#e0e0e0" stroke="#c8c8c8"/><path d="M2 10h4M6 8v4M9 8v4M9 10h3M15 10h3M2 17h4M6 15v4M9 15v4M9 17h3M15 17h3" stroke="#777" stroke-width="1.100" fill="none"/><circle cx="13.500" cy="10" r="1.600" fill="none" stroke="#777"/><circle cx="13.500" cy="17" r="1.600" fill="none" stroke="#777"/></svg>
<div class="tt" style="left:124px;top:450px;"><span class="cj">报警程序</span></div>
<svg style="left:70px;top:481px;" width="14" height="14" viewBox="0 0 14 14"><rect x="0.500" y="0.500" width="13" height="13" rx="1.500" fill="#f4f4f4" stroke="#a6adba" stroke-width="1"/><path d="M3.500 7h7" stroke="#33508f" stroke-width="1.600"/><path d="M7 3.500v7" stroke="#33508f" stroke-width="1.600"/></svg>
<svg style="left:96px;top:475px;" width="20" height="23" viewBox="0 0 20 23"><path d="M0.500 0.500h13l6 6v16h-19z" fill="#f6f6f6" stroke="#c8c8c8"/><path d="M13.500 0.500v6h6" fill="#e0e0e0" stroke="#c8c8c8"/><path d="M2 10h4M6 8v4M9 8v4M9 10h3M15 10h3M2 17h4M6 15v4M9 15v4M9 17h3M15 17h3" stroke="#777" stroke-width="1.100" fill="none"/><circle cx="13.500" cy="10" r="1.600" fill="none" stroke="#777"/><circle cx="13.500" cy="17" r="1.600" fill="none" stroke="#777"/></svg>
<div class="tt" style="left:124px;top:474px;"><span class="cj">自动程序模块</span></div>
<svg style="left:70px;top:505px;" width="14" height="14" viewBox="0 0 14 14"><rect x="0.500" y="0.500" width="13" height="13" rx="1.500" fill="#f4f4f4" stroke="#a6adba" stroke-width="1"/><path d="M3.500 7h7" stroke="#33508f" stroke-width="1.600"/><path d="M7 3.500v7" stroke="#33508f" stroke-width="1.600"/></svg>
<svg style="left:96px;top:499px;" width="20" height="23" viewBox="0 0 20 23"><path d="M0.500 0.500h13l6 6v16h-19z" fill="#f6f6f6" stroke="#c8c8c8"/><path d="M13.500 0.500v6h6" fill="#e0e0e0" stroke="#c8c8c8"/><path d="M2 10h4M6 8v4M9 8v4M9 10h3M15 10h3M2 17h4M6 15v4M9 15v4M9 17h3M15 17h3" stroke="#777" stroke-width="1.100" fill="none"/><circle cx="13.500" cy="10" r="1.600" fill="none" stroke="#777"/><circle cx="13.500" cy="17" r="1.600" fill="none" stroke="#777"/></svg>
<div class="tt" style="left:124px;top:498px;"><span class="cj">翻页程序</span></div>
<svg style="left:70px;top:529px;" width="14" height="14" viewBox="0 0 14 14"><rect x="0.500" y="0.500" width="13" height="13" rx="1.500" fill="#f4f4f4" stroke="#a6adba" stroke-width="1"/><path d="M3.500 7h7" stroke="#33508f" stroke-width="1.600"/><path d="M7 3.500v7" stroke="#33508f" stroke-width="1.600"/></svg>
<svg style="left:96px;top:523px;" width="20" height="23" viewBox="0 0 20 23"><path d="M0.500 0.500h13l6 6v16h-19z" fill="#f6f6f6" stroke="#c8c8c8"/><path d="M13.500 0.500v6h6" fill="#e0e0e0" stroke="#c8c8c8"/><path d="M2 10h4M6 8v4M9 8v4M9 10h3M15 10h3M2 17h4M6 15v4M9 15v4M9 17h3M15 17h3" stroke="#777" stroke-width="1.100" fill="none"/><circle cx="13.500" cy="10" r="1.600" fill="none" stroke="#777"/><circle cx="13.500" cy="17" r="1.600" fill="none" stroke="#777"/></svg>
<div class="tt" style="left:124px;top:522px;"><span class="cj">上料机械手单步程序</span></div>
<svg style="left:70px;top:553px;" width="14" height="14" viewBox="0 0 14 14"><rect x="0.500" y="0.500" width="13" height="13" rx="1.500" fill="#f4f4f4" stroke="#a6adba" stroke-width="1"/><path d="M3.500 7h7" stroke="#33508f" stroke-width="1.600"/><path d="M7 3.500v7" stroke="#33508f" stroke-width="1.600"/></svg>
<svg style="left:96px;top:547px;" width="20" height="23" viewBox="0 0 20 23"><path d="M0.500 0.500h13l6 6v16h-19z" fill="#f6f6f6" stroke="#c8c8c8"/><path d="M13.500 0.500v6h6" fill="#e0e0e0" stroke="#c8c8c8"/><path d="M2 10h4M6 8v4M9 8v4M9 10h3M15 10h3M2 17h4M6 15v4M9 15v4M9 17h3M15 17h3" stroke="#777" stroke-width="1.100" fill="none"/><circle cx="13.500" cy="10" r="1.600" fill="none" stroke="#777"/><circle cx="13.500" cy="17" r="1.600" fill="none" stroke="#777"/></svg>
<div class="tt" style="left:124px;top:546px;"><span class="cj">进电池夹具单步</span></div>
<svg style="left:70px;top:577px;" width="14" height="14" viewBox="0 0 14 14"><rect x="0.500" y="0.500" width="13" height="13" rx="1.500" fill="#f4f4f4" stroke="#a6adba" stroke-width="1"/><path d="M3.500 7h7" stroke="#33508f" stroke-width="1.600"/><path d="M7 3.500v7" stroke="#33508f" stroke-width="1.600"/></svg>
<svg style="left:96px;top:571px;" width="20" height="23" viewBox="0 0 20 23"><path d="M0.500 0.500h13l6 6v16h-19z" fill="#f6f6f6" stroke="#c8c8c8"/><path d="M13.500 0.500v6h6" fill="#e0e0e0" stroke="#c8c8c8"/><path d="M2 10h4M6 8v4M9 8v4M9 10h3M15 10h3M2 17h4M6 15v4M9 15v4M9 17h3M15 17h3" stroke="#777" stroke-width="1.100" fill="none"/><circle cx="13.500" cy="10" r="1.600" fill="none" stroke="#777"/><circle cx="13.500" cy="17" r="1.600" fill="none" stroke="#777"/></svg>
<div style="left:121px;top:571px;width:134px;height:24px;background:#f0f0f0;"></div>
<div class="tt" style="left:124px;top:570px;color:#000;"><span class="cj">出电池夹具单步</span></div>
<svg style="left:70px;top:601px;" width="14" height="14" viewBox="0 0 14 14"><rect x="0.500" y="0.500" width="13" height="13" rx="1.500" fill="#f4f4f4" stroke="#a6adba" stroke-width="1"/><path d="M3.500 7h7" stroke="#33508f" stroke-width="1.600"/><path d="M7 3.500v7" stroke="#33508f" stroke-width="1.600"/></svg>
<svg style="left:96px;top:595px;" width="20" height="23" viewBox="0 0 20 23"><path d="M0.500 0.500h13l6 6v16h-19z" fill="#f6f6f6" stroke="#c8c8c8"/><path d="M13.500 0.500v6h6" fill="#e0e0e0" stroke="#c8c8c8"/><path d="M2 10h4M6 8v4M9 8v4M9 10h3M15 10h3M2 17h4M6 15v4M9 15v4M9 17h3M15 17h3" stroke="#777" stroke-width="1.100" fill="none"/><circle cx="13.500" cy="10" r="1.600" fill="none" stroke="#777"/><circle cx="13.500" cy="17" r="1.600" fill="none" stroke="#777"/></svg>
<div class="tt" style="left:124px;top:594px;"><span class="cj">抽真空程序</span></div>
<svg style="left:70px;top:625px;" width="14" height="14" viewBox="0 0 14 14"><rect x="0.500" y="0.500" width="13" height="13" rx="1.500" fill="#f4f4f4" stroke="#a6adba" stroke-width="1"/><path d="M3.500 7h7" stroke="#33508f" stroke-width="1.600"/><path d="M7 3.500v7" stroke="#33508f" stroke-width="1.600"/></svg>
<svg style="left:96px;top:619px;" width="20" height="23" viewBox="0 0 20 23"><path d="M0.500 0.500h13l6 6v16h-19z" fill="#f6f6f6" stroke="#c8c8c8"/><path d="M13.500 0.500v6h6" fill="#e0e0e0" stroke="#c8c8c8"/><path d="M2 10h4M6 8v4M9 8v4M9 10h3M15 10h3M2 17h4M6 15v4M9 15v4M9 17h3M15 17h3" stroke="#777" stroke-width="1.100" fill="none"/><circle cx="13.500" cy="10" r="1.600" fill="none" stroke="#777"/><circle cx="13.500" cy="17" r="1.600" fill="none" stroke="#777"/></svg>
<div class="tt" style="left:124px;top:618px;"><span class="cj">进电池夹具移位单步</span></div>
<svg style="left:70px;top:649px;" width="14" height="14" viewBox="0 0 14 14"><rect x="0.500" y="0.500" width="13" height="13" rx="1.500" fill="#f4f4f4" stroke="#a6adba" stroke-width="1"/><path d="M3.500 7h7" stroke="#33508f" stroke-width="1.600"/><path d="M7 3.500v7" stroke="#33508f" stroke-width="1.600"/></svg>
<svg style="left:96px;top:643px;" width="20" height="23" viewBox="0 0 20 23"><path d="M0.500 0.500h13l6 6v16h-19z" fill="#f6f6f6" stroke="#c8c8c8"/><path d="M13.500 0.500v6h6" fill="#e0e0e0" stroke="#c8c8c8"/><path d="M2 10h4M6 8v4M9 8v4M9 10h3M15 10h3M2 17h4M6 15v4M9 15v4M9 17h3M15 17h3" stroke="#777" stroke-width="1.100" fill="none"/><circle cx="13.500" cy="10" r="1.600" fill="none" stroke="#777"/><circle cx="13.500" cy="17" r="1.600" fill="none" stroke="#777"/></svg>
<div class="tt" style="left:124px;top:642px;"><span class="cj">推横电池夹具移位单步</span></div>
<svg style="left:70px;top:673px;" width="14" height="14" viewBox="0 0 14 14"><rect x="0.500" y="0.500" width="13" height="13" rx="1.500" fill="#f4f4f4" stroke="#a6adba" stroke-width="1"/><path d="M3.500 7h7" stroke="#33508f" stroke-width="1.600"/><path d="M7 3.500v7" stroke="#33508f" stroke-width="1.600"/></svg>
<svg style="left:96px;top:667px;" width="20" height="23" viewBox="0 0 20 23"><path d="M0.500 0.500h13l6 6v16h-19z" fill="#f6f6f6" stroke="#c8c8c8"/><path d="M13.500 0.500v6h6" fill="#e0e0e0" stroke="#c8c8c8"/><path d="M2 10h4M6 8v4M9 8v4M9 10h3M15 10h3M2 17h4M6 15v4M9 15v4M9 17h3M15 17h3" stroke="#777" stroke-width="1.100" fill="none"/><circle cx="13.500" cy="10" r="1.600" fill="none" stroke="#777"/><circle cx="13.500" cy="17" r="1.600" fill="none" stroke="#777"/></svg>
<div class="tt" style="left:124px;top:666px;"><span class="cj">出电池夹具移位单步</span></div>
<svg style="left:70px;top:697px;" width="14" height="14" viewBox="0 0 14 14"><rect x="0.500" y="0.500" width="13" height="13" rx="1.500" fill="#f4f4f4" stroke="#a6adba" stroke-width="1"/><path d="M3.500 7h7" stroke="#33508f" stroke-width="1.600"/><path d="M7 3.500v7" stroke="#33508f" stroke-width="1.600"/></svg>
<svg style="left:96px;top:691px;" width="20" height="23" viewBox="0 0 20 23"><path d="M0.500 0.500h13l6 6v16h-19z" fill="#f6f6f6" stroke="#c8c8c8"/><path d="M13.500 0.500v6h6" fill="#e0e0e0" stroke="#c8c8c8"/><path d="M2 10h4M6 8v4M9 8v4M9 10h3M15 10h3M2 17h4M6 15v4M9 15v4M9 17h3M15 17h3" stroke="#777" stroke-width="1.100" fill="none"/><circle cx="13.500" cy="10" r="1.600" fill="none" stroke="#777"/><circle cx="13.500" cy="17" r="1.600" fill="none" stroke="#777"/></svg>
<div class="tt" style="left:124px;top:690px;"><span class="cj">推空电池夹具单步</span></div>
<svg style="left:70px;top:721px;" width="14" height="14" viewBox="0 0 14 14"><rect x="0.500" y="0.500" width="13" height="13" rx="1.500" fill="#f4f4f4" stroke="#a6adba" stroke-width="1"/><path d="M3.500 7h7" stroke="#33508f" stroke-width="1.600"/><path d="M7 3.500v7" stroke="#33508f" stroke-width="1.600"/></svg>
<svg style="left:96px;top:715px;" width="20" height="23" viewBox="0 0 20 23"><path d="M0.500 0.500h13l6 6v16h-19z" fill="#f6f6f6" stroke="#c8c8c8"/><path d="M13.500 0.500v6h6" fill="#e0e0e0" stroke="#c8c8c8"/><path d="M2 10h4M6 8v4M9 8v4M9 10h3M15 10h3M2 17h4M6 15v4M9 15v4M9 17h3M15 17h3" stroke="#777" stroke-width="1.100" fill="none"/><circle cx="13.500" cy="10" r="1.600" fill="none" stroke="#777"/><circle cx="13.500" cy="17" r="1.600" fill="none" stroke="#777"/></svg>
<div class="tt" style="left:124px;top:714px;"><span class="cj">推空电池单步</span></div>
<svg style="left:70px;top:745px;" width="14" height="14" viewBox="0 0 14 14"><rect x="0.500" y="0.500" width="13" height="13" rx="1.500" fill="#f4f4f4" stroke="#a6adba" stroke-width="1"/><path d="M3.500 7h7" stroke="#33508f" stroke-width="1.600"/><path d="M7 3.500v7" stroke="#33508f" stroke-width="1.600"/></svg>
<svg style="left:96px;top:739px;" width="20" height="23" viewBox="0 0 20 23"><path d="M0.500 0.500h13l6 6v16h-19z" fill="#f6f6f6" stroke="#c8c8c8"/><path d="M13.500 0.500v6h6" fill="#e0e0e0" stroke="#c8c8c8"/><path d="M2 10h4M6 8v4M9 8v4M9 10h3M15 10h3M2 17h4M6 15v4M9 15v4M9 17h3M15 17h3" stroke="#777" stroke-width="1.100" fill="none"/><circle cx="13.500" cy="10" r="1.600" fill="none" stroke="#777"/><circle cx="13.500" cy="17" r="1.600" fill="none" stroke="#777"/></svg>
<div class="tt" style="left:124px;top:738px;"><span class="cj">机械手出料单步</span></div>
<svg style="left:70px;top:769px;" width="14" height="14" viewBox="0 0 14 14"><rect x="0.500" y="0.500" width="13" height="13" rx="1.500" fill="#f4f4f4" stroke="#a6adba" stroke-width="1"/><path d="M3.500 7h7" stroke="#33508f" stroke-width="1.600"/><path d="M7 3.500v7" stroke="#33508f" stroke-width="1.600"/></svg>
<svg style="left:96px;top:763px;" width="20" height="23" viewBox="0 0 20 23"><path d="M0.500 0.500h13l6 6v16h-19z" fill="#f6f6f6" stroke="#c8c8c8"/><path d="M13.500 0.500v6h6" fill="#e0e0e0" stroke="#c8c8c8"/><path d="M2 10h4M6 8v4M9 8v4M9 10h3M15 10h3M2 17h4M6 15v4M9 15v4M9 17h3M15 17h3" stroke="#777" stroke-width="1.100" fill="none"/><circle cx="13.500" cy="10" r="1.600" fill="none" stroke="#777"/><circle cx="13.500" cy="17" r="1.600" fill="none" stroke="#777"/></svg>
<div class="tt" style="left:124px;top:762px;"><span class="cj">通讯程序</span></div>
<svg style="left:70px;top:793px;" width="14" height="14" viewBox="0 0 14 14"><rect x="0.500" y="0.500" width="13" height="13" rx="1.500" fill="#f4f4f4" stroke="#a6adba" stroke-width="1"/><path d="M3.500 7h7" stroke="#33508f" stroke-width="1.600"/><path d="M7 3.500v7" stroke="#33508f" stroke-width="1.600"/></svg>
<svg style="left:96px;top:787px;" width="20" height="23" viewBox="0 0 20 23"><path d="M0.500 0.500h13l6 6v16h-19z" fill="#f6f6f6" stroke="#c8c8c8"/><path d="M13.500 0.500v6h6" fill="#e0e0e0" stroke="#c8c8c8"/><path d="M2 10h4M6 8v4M9 8v4M9 10h3M15 10h3M2 17h4M6 15v4M9 15v4M9 17h3M15 17h3" stroke="#777" stroke-width="1.100" fill="none"/><circle cx="13.500" cy="10" r="1.600" fill="none" stroke="#777"/><circle cx="13.500" cy="17" r="1.600" fill="none" stroke="#777"/></svg>
<div class="tt" style="left:124px;top:786px;"><span class="cj">移位模块</span></div>
<svg style="left:70px;top:817px;" width="14" height="14" viewBox="0 0 14 14"><rect x="0.500" y="0.500" width="13" height="13" rx="1.500" fill="#f4f4f4" stroke="#a6adba" stroke-width="1"/><path d="M3.500 7h7" stroke="#33508f" stroke-width="1.600"/><path d="M7 3.500v7" stroke="#33508f" stroke-width="1.600"/></svg>
<svg style="left:96px;top:811px;" width="20" height="23" viewBox="0 0 20 23"><path d="M0.500 0.500h13l6 6v16h-19z" fill="#f6f6f6" stroke="#c8c8c8"/><path d="M13.500 0.500v6h6" fill="#e0e0e0" stroke="#c8c8c8"/><path d="M2 10h4M6 8v4M9 8v4M9 10h3M15 10h3M2 17h4M6 15v4M9 15v4M9 17h3M15 17h3" stroke="#777" stroke-width="1.100" fill="none"/><circle cx="13.500" cy="10" r="1.600" fill="none" stroke="#777"/><circle cx="13.500" cy="17" r="1.600" fill="none" stroke="#777"/></svg>
<div class="tt" style="left:124px;top:810px;"><span class="cj">注液系统控制</span></div>
<svg style="left:70px;top:841px;" width="14" height="14" viewBox="0 0 14 14"><rect x="0.500" y="0.500" width="13" height="13" rx="1.500" fill="#f4f4f4" stroke="#a6adba" stroke-width="1"/><path d="M3.500 7h7" stroke="#33508f" stroke-width="1.600"/><path d="M7 3.500v7" stroke="#33508f" stroke-width="1.600"/></svg>
<svg style="left:96px;top:835px;" width="20" height="23" viewBox="0 0 20 23"><path d="M0.500 0.500h13l6 6v16h-19z" fill="#f6f6f6" stroke="#c8c8c8"/><path d="M13.500 0.500v6h6" fill="#e0e0e0" stroke="#c8c8c8"/><path d="M2 10h4M6 8v4M9 8v4M9 10h3M15 10h3M2 17h4M6 15v4M9 15v4M9 17h3M15 17h3" stroke="#777" stroke-width="1.100" fill="none"/><circle cx="13.500" cy="10" r="1.600" fill="none" stroke="#777"/><circle cx="13.500" cy="17" r="1.600" fill="none" stroke="#777"/></svg>
<div class="tt" style="left:124px;top:834px;"><span class="cj">夹具识别模块</span></div>
<svg style="left:70px;top:865px;" width="14" height="14" viewBox="0 0 14 14"><rect x="0.500" y="0.500" width="13" height="13" rx="1.500" fill="#f4f4f4" stroke="#a6adba" stroke-width="1"/><path d="M3.500 7h7" stroke="#33508f" stroke-width="1.600"/><path d="M7 3.500v7" stroke="#33508f" stroke-width="1.600"/></svg>
<svg style="left:96px;top:859px;" width="20" height="23" viewBox="0 0 20 23"><path d="M0.500 0.500h13l6 6v16h-19z" fill="#f6f6f6" stroke="#c8c8c8"/><path d="M13.500 0.500v6h6" fill="#e0e0e0" stroke="#c8c8c8"/><path d="M2 10h4M6 8v4M9 8v4M9 10h3M15 10h3M2 17h4M6 15v4M9 15v4M9 17h3M15 17h3" stroke="#777" stroke-width="1.100" fill="none"/><circle cx="13.500" cy="10" r="1.600" fill="none" stroke="#777"/><circle cx="13.500" cy="17" r="1.600" fill="none" stroke="#777"/></svg>
<div class="tt" style="left:124px;top:858px;"><span class="cj">输出模块</span></div>
<svg style="left:66px;top:885px;" width="22" height="20" viewBox="0 0 22 20"><path d="M0 2.500c0-1 .5-1.500 1.500-1.500h7l2 2.500h11c1 0 1.500.5 1.500 1.500v14h-23z" fill="#f3c14b"/><path d="M0 6.500h23v12c0 1-.5 1.500-1.500 1.500h-20c-1 0-1.500-.5-1.500-1.500z" fill="#ffe08a"/></svg>
<div class="tt" style="left:95px;top:882px;"><span class="cj">初始化模块</span></div>
<svg style="left:66px;top:909px;" width="22" height="20" viewBox="0 0 22 20"><path d="M0 2.500c0-1 .5-1.500 1.500-1.500h7l2 2.500h11c1 0 1.500.5 1.500 1.500v14h-23z" fill="#f3c14b"/><path d="M0 6.500h23v12c0 1-.5 1.500-1.500 1.500h-20c-1 0-1.500-.5-1.500-1.500z" fill="#ffe08a"/></svg>
<div class="tt" style="left:95px;top:906px;"><span class="cj">后备模块</span></div>
<svg style="left:66px;top:933px;" width="22" height="20" viewBox="0 0 22 20"><path d="M0 2.500c0-1 .5-1.500 1.500-1.500h7l2 2.500h11c1 0 1.500.5 1.500 1.500v14h-23z" fill="#f3c14b"/><path d="M0 6.500h23v12c0 1-.5 1.500-1.500 1.500h-20c-1 0-1.500-.5-1.500-1.500z" fill="#ffe08a"/></svg>
<div class="tt" style="left:95px;top:930px;"><span class="cj">固定周期模块</span></div>
<div style="left:2px;top:953px;width:479px;height:2px;background:#4d5c7b;"></div>
<div style="left:488px;top:150px;width:1402px;height:34px;background:#a3a3a3;border-top:1px solid #aaa;border-left:1px solid #a0a0a0;"></div>
<div style="left:489px;top:151px;width:198px;height:33px;background:#c8c8c8;"></div>
<div style="left:495px;top:151px;height:34px;font-size:18.5px;line-height:34px;color:#000;white-space:pre;">出电池夹具单步</div>
<div style="left:695px;top:151px;height:34px;font-size:18.5px;line-height:34px;color:#000;white-space:pre;">翻页程序</div>
<div style="left:841px;top:151px;height:34px;font-size:18.5px;line-height:34px;color:#000;white-space:pre;">自动程序模块</div>
<svg style="left:662px;top:160px;" width="15" height="15" viewBox="0 0 15 15"><path d="M1.500 1.500l12 12M13.500 1.500l-12 12" stroke="#000" stroke-width="2.600" fill="none"/></svg>
<svg style="left:808px;top:160px;" width="15" height="15" viewBox="0 0 15 15"><path d="M1.500 1.500l12 12M13.500 1.500l-12 12" stroke="#000" stroke-width="2.600" fill="none"/></svg>
<div style="left:483px;top:150px;width:5px;height:836px;background:#f0f0f0;"></div>
<div style="left:488px;top:184px;width:1405px;height:40px;background:#f0f0f0;"></div>
<div style="left:488px;top:223px;width:1406px;height:763px;background:#fff;border:1px solid #9a9a9a;border-top:2px solid #a8acb4;border-left:2px solid #a8acb4;"></div>
<div style="left:490px;top:225px;width:1403px;height:20px;background:#d9e8fd;border-bottom:2px solid #7d838b;"></div>
<div style="left:719px;top:225px;width:1px;height:18px;background:#a8a8a8;"></div>
<div style="left:842px;top:225px;width:1px;height:18px;background:#a8a8a8;"></div>
<div style="left:965px;top:225px;width:1px;height:18px;background:#a8a8a8;"></div>
<div style="left:1088px;top:225px;width:1px;height:18px;background:#a8a8a8;"></div>
<div style="left:1211px;top:225px;width:1px;height:18px;background:#a8a8a8;"></div>
<div style="left:1334px;top:225px;width:1px;height:18px;background:#a8a8a8;"></div>
<div style="left:1457px;top:225px;width:1px;height:18px;background:#a8a8a8;"></div>
<div style="left:1580px;top:225px;width:1px;height:18px;background:#a8a8a8;"></div>
<div style="left:1703px;top:225px;width:1px;height:18px;background:#a8a8a8;"></div>
<div style="left:1826px;top:225px;width:1px;height:18px;background:#a8a8a8;"></div>
<div style="left:598px;top:224px;height:19px;font-size:15px;line-height:19px;color:#222;white-space:pre;font-family:'Liberation Sans',sans-serif;width:123px;text-align:center;">1</div>
<div style="left:721px;top:224px;height:19px;font-size:15px;line-height:19px;color:#222;white-space:pre;font-family:'Liberation Sans',sans-serif;width:123px;text-align:center;">2</div>
<div style="left:844px;top:224px;height:19px;font-size:15px;line-height:19px;color:#222;white-space:pre;font-family:'Liberation Sans',sans-serif;width:123px;text-align:center;">3</div>
<div style="left:967px;top:224px;height:19px;font-size:15px;line-height:19px;color:#222;white-space:pre;font-family:'Liberation Sans',sans-serif;width:123px;text-align:center;">4</div>
<div style="left:1090px;top:224px;height:19px;font-size:15px;line-height:19px;color:#222;white-space:pre;font-family:'Liberation Sans',sans-serif;width:123px;text-align:center;">5</div>
<div style="left:1213px;top:224px;height:19px;font-size:15px;line-height:19px;color:#222;white-space:pre;font-family:'Liberation Sans',sans-serif;width:123px;text-align:center;">6</div>
<div style="left:1336px;top:224px;height:19px;font-size:15px;line-height:19px;color:#222;white-space:pre;font-family:'Liberation Sans',sans-serif;width:123px;text-align:center;">7</div>
<div style="left:1459px;top:224px;height:19px;font-size:15px;line-height:19px;color:#222;white-space:pre;font-family:'Liberation Sans',sans-serif;width:123px;text-align:center;">8</div>
<div style="left:1582px;top:224px;height:19px;font-size:15px;line-height:19px;color:#222;white-space:pre;font-family:'Liberation Sans',sans-serif;width:123px;text-align:center;">9</div>
<div style="left:1705px;top:224px;height:19px;font-size:15px;line-height:19px;color:#222;white-space:pre;font-family:'Liberation Sans',sans-serif;width:123px;text-align:center;">10</div>
<div style="left:596px;top:223px;width:124px;height:2px;background:#777;"></div>
<div style="left:596px;top:223px;width:2px;height:20px;background:#80868e;"></div>
<div style="left:490px;top:245px;width:105px;height:740px;background:#d9e8fd;"></div>
<div style="left:560px;top:225px;width:2px;height:760px;background:#aeb2ba;"></div>
<div style="left:489px;top:372px;width:106px;height:1px;background:#9a9a9a;"></div>
<div style="left:489px;top:501px;width:106px;height:1px;background:#9a9a9a;"></div>
<div style="left:489px;top:630px;width:106px;height:1px;background:#9a9a9a;"></div>
<div style="left:489px;top:759px;width:106px;height:1px;background:#9a9a9a;"></div>
<div style="left:489px;top:888px;width:106px;height:1px;background:#9a9a9a;"></div>
<div style="left:488px;top:296px;height:24px;font-size:16.4px;line-height:24px;color:#1a1a1a;white-space:pre;font-family:'Liberation Sans',sans-serif;width:71px;text-align:center;">00001</div>
<div style="left:488px;top:425px;height:24px;font-size:16.4px;line-height:24px;color:#1a1a1a;white-space:pre;font-family:'Liberation Sans',sans-serif;width:71px;text-align:center;">00002</div>
<div style="left:488px;top:554px;height:24px;font-size:16.4px;line-height:24px;color:#1a1a1a;white-space:pre;font-family:'Liberation Sans',sans-serif;width:71px;text-align:center;">00003</div>
<div style="left:488px;top:683px;height:24px;font-size:16.4px;line-height:24px;color:#1a1a1a;white-space:pre;font-family:'Liberation Sans',sans-serif;width:71px;text-align:center;">00004</div>
<div style="left:488px;top:812px;height:24px;font-size:16.4px;line-height:24px;color:#1a1a1a;white-space:pre;font-family:'Liberation Sans',sans-serif;width:71px;text-align:center;">00005</div>
<div style="left:488px;top:941px;height:24px;font-size:16.4px;line-height:24px;color:#1a1a1a;white-space:pre;font-family:'Liberation Sans',sans-serif;width:71px;text-align:center;">00006</div>
<div style="left:594px;top:244px;width:3px;height:741px;background:#000;"></div>
<div style="left:1827px;top:243px;width:3px;height:742px;background:#000;"></div>
<svg style="left:597px;top:244px" width="1231" height="741" viewBox="0 0 1231 741"><g stroke="#c9c9c9" stroke-width="1" stroke-dasharray="4 4" fill="none"><path d="M122.5 0V741"/><path d="M245.5 0V741"/><path d="M368.5 0V741"/><path d="M491.5 0V741"/><path d="M614.5 0V741"/><path d="M737.5 0V741"/><path d="M860.5 0V741"/><path d="M983.5 0V741"/><path d="M1106.5 0V741"/><path d="M0 128.5H1231"/><path d="M0 257.5H1231"/><path d="M0 386.5H1231"/><path d="M0 515.5H1231"/><path d="M0 644.5H1231"/></g></svg>
<div style="left:598px;top:299px;width:47px;height:1px;background:#2f6b2f;box-shadow:0 1px 0 rgba(47,107,47,.3);"></div>
<div style="left:672px;top:299px;width:47px;height:1px;background:#2f6b2f;box-shadow:0 1px 0 rgba(47,107,47,.3);"></div>
<div style="left:645px;top:286px;width:1px;height:27px;background:#2f6b2f;box-shadow:1px 0 0 rgba(47,107,47,.35);"></div>
<div style="left:672px;top:286px;width:1px;height:27px;background:#2f6b2f;box-shadow:1px 0 0 rgba(47,107,47,.35);"></div>
<div class="dv" style="left:598px;top:261px;width:123px;color:#9a32cd;"><span class="lm" style="font-size:15.0px">R01_1100</span></div>
<div class="cm" style="left:611px;top:334px;">工位12电池感<br>应器</div>
<div style="left:721px;top:299px;width:47px;height:1px;background:#2f6b2f;box-shadow:0 1px 0 rgba(47,107,47,.3);"></div>
<div style="left:795px;top:299px;width:47px;height:1px;background:#2f6b2f;box-shadow:0 1px 0 rgba(47,107,47,.3);"></div>
<div style="left:768px;top:286px;width:1px;height:27px;background:#2f6b2f;box-shadow:1px 0 0 rgba(47,107,47,.35);"></div>
<div style="left:795px;top:286px;width:1px;height:27px;background:#2f6b2f;box-shadow:1px 0 0 rgba(47,107,47,.35);"></div>
<svg style="left:754px;top:284px;" width="58" height="30" viewBox="0 0 58 30"><path d="M1 28.500L56 1.500" stroke="#2f6b2f" stroke-width="1.300" fill="none"/></svg>
<div class="dv" style="left:721px;top:261px;width:123px;color:#9a32cd;"><span class="lm" style="font-size:15.0px">R01_1101</span></div>
<div class="cm" style="left:734px;top:334px;">工位13电池感<br>应器</div>
<div style="left:858px;top:337px;width:6px;height:1px;background:#8fcf8f;"></div>
<div style="left:858px;top:348px;width:6px;height:1px;background:#8fcf8f;"></div>
<div style="left:859px;top:356px;width:1px;height:12px;background:#a8d8a8;"></div>
<div style="left:860px;top:356px;width:3px;height:1px;background:#a8d8a8;"></div>
<div style="left:842px;top:299px;width:28px;height:1px;background:#2f6b2f;box-shadow:0 1px 0 rgba(47,107,47,.3);"></div>
<div style="left:598px;top:428px;width:47px;height:1px;background:#2f6b2f;box-shadow:0 1px 0 rgba(47,107,47,.3);"></div>
<div style="left:672px;top:428px;width:47px;height:1px;background:#2f6b2f;box-shadow:0 1px 0 rgba(47,107,47,.3);"></div>
<div style="left:645px;top:415px;width:1px;height:27px;background:#2f6b2f;box-shadow:1px 0 0 rgba(47,107,47,.35);"></div>
<div style="left:672px;top:415px;width:1px;height:27px;background:#2f6b2f;box-shadow:1px 0 0 rgba(47,107,47,.35);"></div>
<div class="dv" style="left:598px;top:390px;width:123px;color:#222;"><span class="lm" style="font-size:15.0px">MR010</span></div>
<div class="cm" style="left:611px;top:463px;">空运行</div>
<div style="left:719px;top:428px;width:151px;height:1px;background:#333;box-shadow:0 1px 0 rgba(40,40,40,.3);"></div>
<div style="left:598px;top:557px;width:47px;height:1px;background:#2f6b2f;box-shadow:0 1px 0 rgba(47,107,47,.3);"></div>
<div style="left:672px;top:557px;width:47px;height:1px;background:#2f6b2f;box-shadow:0 1px 0 rgba(47,107,47,.3);"></div>
<div style="left:645px;top:544px;width:1px;height:27px;background:#2f6b2f;box-shadow:1px 0 0 rgba(47,107,47,.35);"></div>
<div style="left:672px;top:544px;width:1px;height:27px;background:#2f6b2f;box-shadow:1px 0 0 rgba(47,107,47,.35);"></div>
<div class="dv" style="left:598px;top:519px;width:123px;color:#222;"><span class="lm" style="font-size:15.0px">MR605</span></div>
<div class="cm" style="left:611px;top:592px;">出电池夹具单<br>步记忆</div>
<div style="left:719px;top:557px;width:151px;height:1px;background:#333;box-shadow:0 1px 0 rgba(40,40,40,.3);"></div>
<svg style="left:613px;top:675px;" width="22" height="23" viewBox="0 0 22 23"><path d="M5 1.500l10 10l-10 10M10.500 1.500l10 10l-10 10" stroke="#2f6b2f" stroke-width="1.300" fill="none"/></svg>
<div style="left:613px;top:686px;width:106px;height:1px;background:#333;box-shadow:0 1px 0 rgba(40,40,40,.3);"></div>
<div class="dv" style="left:598px;top:648px;width:123px;color:#222;"><span class="lm" style="font-size:15.0px">#0</span></div>
<div style="left:721px;top:686px;width:47px;height:1px;background:#2f6b2f;box-shadow:0 1px 0 rgba(47,107,47,.3);"></div>
<div style="left:795px;top:686px;width:47px;height:1px;background:#2f6b2f;box-shadow:0 1px 0 rgba(47,107,47,.3);"></div>
<div style="left:768px;top:673px;width:1px;height:27px;background:#2f6b2f;box-shadow:1px 0 0 rgba(47,107,47,.35);"></div>
<div style="left:795px;top:673px;width:1px;height:27px;background:#2f6b2f;box-shadow:1px 0 0 rgba(47,107,47,.35);"></div>
<div class="dv" style="left:721px;top:648px;width:123px;color:#9a32cd;"><span class="lm" style="font-size:15.0px">R01_614</span></div>
<div class="cm" style="left:734px;top:721px;">12-13进电池<br>夹具移位气缸</div>
<div style="left:842px;top:686px;width:28px;height:1px;background:#2f6b2f;box-shadow:0 1px 0 rgba(47,107,47,.3);"></div>
<div style="left:858px;top:724px;width:6px;height:1px;background:#8fcf8f;"></div>
<div style="left:858px;top:735px;width:6px;height:1px;background:#8fcf8f;"></div>
<div style="left:858px;top:741px;width:6px;height:1px;background:#8fcf8f;"></div>
<svg style="left:613px;top:804px;" width="22" height="23" viewBox="0 0 22 23"><path d="M5 1.500l10 10l-10 10M10.500 1.500l10 10l-10 10" stroke="#2f6b2f" stroke-width="1.300" fill="none"/></svg>
<div style="left:613px;top:815px;width:106px;height:1px;background:#333;box-shadow:0 1px 0 rgba(40,40,40,.3);"></div>
<div class="dv" style="left:598px;top:777px;width:123px;color:#222;"><span class="lm" style="font-size:15.0px">#1</span></div>
<div style="left:719px;top:815px;width:151px;height:1px;background:#333;box-shadow:0 1px 0 rgba(40,40,40,.3);"></div>
<svg style="left:613px;top:933px;" width="22" height="23" viewBox="0 0 22 23"><path d="M5 1.500l10 10l-10 10M10.500 1.500l10 10l-10 10" stroke="#2f6b2f" stroke-width="1.300" fill="none"/></svg>
<div style="left:613px;top:944px;width:106px;height:1px;background:#333;box-shadow:0 1px 0 rgba(40,40,40,.3);"></div>
<div class="dv" style="left:598px;top:906px;width:123px;color:#222;"><span class="lm" style="font-size:15.0px">#2</span></div>
<div style="left:721px;top:944px;width:47px;height:1px;background:#2f6b2f;box-shadow:0 1px 0 rgba(47,107,47,.3);"></div>
<div style="left:795px;top:944px;width:47px;height:1px;background:#2f6b2f;box-shadow:0 1px 0 rgba(47,107,47,.3);"></div>
<div style="left:768px;top:931px;width:1px;height:27px;background:#2f6b2f;box-shadow:1px 0 0 rgba(47,107,47,.35);"></div>
<div style="left:795px;top:931px;width:1px;height:27px;background:#2f6b2f;box-shadow:1px 0 0 rgba(47,107,47,.35);"></div>
<svg style="left:754px;top:929px;" width="58" height="30" viewBox="0 0 58 30"><path d="M1 28.500L56 1.500" stroke="#2f6b2f" stroke-width="1.300" fill="none"/></svg>
<div class="dv" style="left:721px;top:906px;width:123px;color:#222;"><span class="lm" style="font-size:15.0px">MR102</span></div>
<div style="left:842px;top:944px;width:861px;height:1px;background:#333;box-shadow:0 1px 0 rgba(40,40,40,.3);"></div>
<div style="left:1703px;top:944px;width:125px;height:1px;background:#2f6b2f;box-shadow:0 1px 0 rgba(47,107,47,.3);"></div>
<svg style="left:1752px;top:931px;" width="27" height="27" viewBox="0 0 27 27"><circle cx="13.500" cy="13.500" r="12" fill="#fff" stroke="#2f6b2f" stroke-width="1.300"/></svg>
<div class="dv" style="left:1704px;top:906px;width:123px;color:#222;"><span class="lm" style="font-size:15.0px">MR605</span></div>
<div style="left:597px;top:979px;width:1230px;height:6px;overflow:hidden;"><div class="cm" style="left:137px;top:0px;">退出单步</div><div class="cm" style="left:1120px;top:0px;">出电池夹具单</div></div>
<div style="left:597px;top:244px;width:123px;height:128px;border:2px solid #a9e58f;"></div>
<div style="left:1894px;top:150px;width:26px;height:836px;background:#f0f0f0;"></div>
<div style="left:1890px;top:182px;width:30px;height:1px;background:#b8b8b8;"></div>
<svg style="left:1900px;top:171px;" width="14" height="8" viewBox="0 0 14 8"><path d="M1 1h12l-6 6z" fill="#000"/></svg>
<div style="left:1896px;top:187px;width:24px;height:23px;background:#999;"></div>
<svg style="left:1899px;top:190px;" width="17" height="18" viewBox="0 0 17 18"><path d="M8.500 1v16M0.500 9h16" stroke="#fff" stroke-width="3"/></svg>
<svg style="left:1895px;top:221px;" width="24" height="28" viewBox="0 0 24 28"><path d="M0 12.500h24M0 15.500h24" stroke="#333" stroke-width="1.200"/><path d="M12 1v10M12 27v-10M8 5l4-4l4 4M8 23l4 4l4-4" stroke="#333" stroke-width="1.200" fill="none"/></svg>
<svg style="left:1899px;top:255px;" width="16" height="10" viewBox="0 0 16 10"><path d="M2 8.500l6-6l6 6" stroke="#555" stroke-width="3" fill="none"/></svg>
<div style="left:1897px;top:272px;width:21px;height:46px;background:#cdcdcd;"></div>
<svg style="left:1899px;top:970px;" width="16" height="10" viewBox="0 0 16 10"><path d="M2 1.500l6 6l6-6" stroke="#555" stroke-width="3" fill="none"/></svg>
<div style="left:863px;top:26px;width:1027px;height:844px;background:#f0f0f0;border:1px solid #8c8c8c;box-shadow:0 2px 12px rgba(0,0,0,.20),0 0 3px rgba(0,0,0,.10);"></div>
<div style="left:864px;top:27px;width:1025px;height:46px;background:#fff;"></div>
<svg style="left:876px;top:37px;" width="24" height="23" viewBox="0 0 24 23"><rect x="0" y="0" width="21.500" height="7" fill="#777"/><rect x="2.500" y="15" width="21.500" height="8" fill="#777"/><rect x="0.5" y="0" width="2.200" height="7" fill="#4a4a4a"/><rect x="3.0" y="15" width="2.200" height="8" fill="#4a4a4a"/><rect x="4.1" y="0" width="2.200" height="7" fill="#4a4a4a"/><rect x="6.6" y="15" width="2.200" height="8" fill="#4a4a4a"/><rect x="7.7" y="0" width="2.200" height="7" fill="#4a4a4a"/><rect x="10.2" y="15" width="2.200" height="8" fill="#4a4a4a"/><rect x="11.3" y="0" width="2.200" height="7" fill="#4a4a4a"/><rect x="13.8" y="15" width="2.200" height="8" fill="#4a4a4a"/><rect x="14.9" y="0" width="2.200" height="7" fill="#4a4a4a"/><rect x="17.4" y="15" width="2.200" height="8" fill="#4a4a4a"/><rect x="18.5" y="0" width="2.200" height="7" fill="#4a4a4a"/><rect x="21.0" y="15" width="2.200" height="8" fill="#4a4a4a"/><path d="M21.500 3.500h2v7.500h-23v8.500h2" fill="none" stroke="#555" stroke-width="1.200"/></svg>
<div style="left:905px;top:27px;height:46px;font-size:18.2px;line-height:46px;color:#959595;white-space:pre;">单元编辑器 - 编辑模式</div>
<svg style="left:1707px;top:41px;" width="160" height="18" viewBox="0 0 160 18"><g fill="none" stroke="#8a8a8a" stroke-width="1"><path d="M0 8.500h15"/><rect x="69.500" y="1.500" width="14" height="14"/><path d="M140.500 1.500l15 15M155.500 1.500l-15 15"/></g></svg>
<div style="left:888px;top:73px;height:37px;font-size:18px;line-height:37px;color:#000;white-space:pre;">文件(F)</div>
<div style="left:967px;top:73px;height:37px;font-size:18px;line-height:37px;color:#000;white-space:pre;">编辑(E)</div>
<div style="left:1048px;top:73px;height:37px;font-size:18px;line-height:37px;color:#000;white-space:pre;">转换(P)</div>
<div style="left:1129px;top:73px;height:37px;font-size:18px;line-height:37px;color:#000;white-space:pre;">视图(V)</div>
<div style="left:1211px;top:73px;height:37px;font-size:18px;line-height:37px;color:#000;white-space:pre;">选项(O)</div>
<div style="left:1297px;top:73px;height:37px;font-size:18px;line-height:37px;color:#000;white-space:pre;">窗口(W)</div>
<div style="left:1386px;top:73px;height:37px;font-size:18px;line-height:37px;color:#000;white-space:pre;">帮助(H)</div>
<div style="left:950px;top:112px;width:1px;height:31px;background:#c4c4c4;"></div>
<div style="left:995px;top:112px;width:1px;height:31px;background:#c4c4c4;"></div>
<div style="left:1106px;top:112px;width:1px;height:31px;background:#c4c4c4;"></div>
<div style="left:1184px;top:112px;width:1px;height:31px;background:#c4c4c4;"></div>
<div style="left:1328px;top:112px;width:1px;height:31px;background:#c4c4c4;"></div>
<div style="left:1505px;top:112px;width:1px;height:31px;background:#c4c4c4;"></div>
<div style="left:1583px;top:112px;width:1px;height:31px;background:#c4c4c4;"></div>
<svg style="left:882px;top:116px;" width="24" height="24" viewBox="0 0 24 24"><path d="M7.500 1.500h10l5 5v16h-15z" fill="#fff" stroke="#aaa" stroke-width="1.200"/><path d="M11 9h3M14 7v4M16.500 7v4M16.500 9h4M11 16h3M14 14v4M16.500 14v4M16.500 16h4" stroke="#777" stroke-width="1" fill="none"/><path d="M0 9h6v-4.500l8 6.500l-8 6.500v-4.500h-6z" fill="#3a7fd0"/></svg>
<svg style="left:915px;top:116px;" width="24" height="24" viewBox="0 0 24 24"><rect x="0" y="9" width="15" height="14" fill="#4a4a4a"/><rect x="1.5" y="10.5" width="8.25" height="4.48" fill="#5fd06a"/><rect x="10.5" y="9" width="1.200" height="14" fill="#222"/><rect x="5.25" y="17.68" width="2.500" height="2.500" fill="#f0a030"/><rect x="0" y="15.3" width="10.5" height="1" fill="#222"/><path d="M12 7c2-6 10-5 10 2" fill="none" stroke="#3a7fd0" stroke-width="2.200"/><path d="M9 3l5.500 0l-1 6z" fill="#3a7fd0"/></svg>
<svg style="left:960px;top:116px;" width="24" height="24" viewBox="0 0 24 24"><rect x="9" y="1.500" width="14" height="11" fill="#b9dcf5" stroke="#4a6f95" stroke-width="1.400"/><path d="M16 12.500v3M18 15.500h5" stroke="#555" stroke-width="1.600"/><rect x="0" y="9" width="15" height="14" fill="#4a4a4a"/><rect x="1.5" y="10.5" width="8.25" height="4.48" fill="#5fd06a"/><rect x="10.5" y="9" width="1.200" height="14" fill="#222"/><rect x="5.25" y="17.68" width="2.500" height="2.500" fill="#f0a030"/><rect x="0" y="15.3" width="10.5" height="1" fill="#222"/><path d="M3 8c0-4 3-5 6-5" fill="none" stroke="#3a7fd0" stroke-width="2.200"/><path d="M0 7h7l-3.500-5z" fill="#3a7fd0"/></svg>
<svg style="left:1005px;top:116px;" width="24" height="24" viewBox="0 0 24 24"><path d="M6 1l7.500 15M18 1l-7.500 15" stroke="#555" stroke-width="2.600" fill="none"/><circle cx="6.500" cy="19" r="3.400" fill="none" stroke="#3a7fd0" stroke-width="2.200"/><circle cx="17.500" cy="19" r="3.400" fill="none" stroke="#3a7fd0" stroke-width="2.200"/></svg>
<svg style="left:1038px;top:116px;" width="24" height="24" viewBox="0 0 24 24"><path d="M1.500 1.500h8l4 4v11h-12z" fill="#fff" stroke="#8a8a8a" stroke-width="1.200"/><path d="M4 7h6M4 10h6M4 13h6" stroke="#3a7fd0" stroke-width="1.200"/><path d="M10.500 8.500h8l4 4v10h-12z" fill="#fff" stroke="#8a8a8a" stroke-width="1.200"/><path d="M13 14h7M13 17h7M13 20h7" stroke="#3a7fd0" stroke-width="1.200"/></svg>
<svg style="left:1071px;top:116px;" width="24" height="24" viewBox="0 0 24 24"><rect x="1.500" y="3" width="14" height="18" fill="#c4c4c4"/><rect x="5" y="1" width="7" height="4" fill="#aaa"/><path d="M9.500 8.500h9l4 4v10h-13z" fill="#f4f4f4" stroke="#bdbdbd" stroke-width="1.200"/><path d="M12 14h8M12 17h8M12 20h8" stroke="#c8c8c8" stroke-width="1.200"/></svg>
<svg style="left:1116px;top:116px;" width="24" height="24" viewBox="0 0 24 24"><rect x="1.500" y="4.500" width="17" height="18" fill="#fff" stroke="#999" stroke-width="1.200"/><path d="M4 12h7M4 15h10M4 18h10" stroke="#3a7fd0" stroke-width="1.300"/><g transform="translate(8,-2)"><path d="M3 15l10-12l4 3.200l-10 12z" fill="#36a33a"/><path d="M3 15l4 3.200l-6 2.300z" fill="#e8c9a0"/><path d="M1 20.500l2.200-.8l-1.400-1.200z" fill="#333"/></g></svg>
<svg style="left:1149px;top:116px;" width="24" height="24" viewBox="0 0 24 24"><rect x="0" y="2" width="17" height="20" fill="#4a4a4a"/><rect x="1.5" y="3.5" width="9.350000000000001" height="6.4" fill="#5fd06a"/><rect x="11.899999999999999" y="2" width="1.200" height="20" fill="#222"/><rect x="5.949999999999999" y="14.4" width="2.500" height="2.500" fill="#f0a030"/><rect x="0" y="11.0" width="11.899999999999999" height="1" fill="#222"/><rect x="17" y="2" width="7" height="20" fill="#e03a3a"/><rect x="19" y="4" width="3" height="2" fill="#6fe07a"/></svg>
<svg style="left:1194px;top:116px;" width="24" height="24" viewBox="0 0 24 24"><circle cx="12" cy="12" r="10.500" fill="#fff" stroke="#2a4f9a" stroke-width="2"/><text x="12" y="11" font-family="Liberation Sans,sans-serif" font-size="8" font-weight="bold" fill="#555" text-anchor="middle">DM</text><text x="12" y="19" font-family="Liberation Sans,sans-serif" font-size="8" font-weight="bold" fill="#555" text-anchor="middle">RLY</text><path d="M17 17l6 6v-6z" fill="#2a4f9a"/></svg>
<svg style="left:1227px;top:116px;" width="24" height="24" viewBox="0 0 24 24"><text x="8" y="14" font-family="Liberation Sans,sans-serif" font-size="8.500" font-weight="bold" fill="#666" text-anchor="middle">DM</text><text x="9" y="23" font-family="Liberation Sans,sans-serif" font-size="8.500" font-weight="bold" fill="#666" text-anchor="middle">RLY</text><g transform="translate(8,-2)"><path d="M3 15l10-12l4 3.200l-10 12z" fill="#36a33a"/><path d="M3 15l4 3.200l-6 2.300z" fill="#e8c9a0"/><path d="M1 20.500l2.200-.8l-1.400-1.200z" fill="#333"/></g></svg>
<svg style="left:1260px;top:116px;" width="24" height="24" viewBox="0 0 24 24"><rect x="1" y="3" width="19" height="19" fill="#fff" stroke="#888" stroke-width="1.200"/><text x="10.500" y="19" font-family="Liberation Sans,sans-serif" font-size="8" font-weight="bold" fill="#666" text-anchor="middle">RLY</text><path d="M6 9l5 6l12-13" stroke="#e03030" stroke-width="3" fill="none"/></svg>
<svg style="left:1293px;top:116px;" width="24" height="24" viewBox="0 0 24 24"><path d="M4 10c2-9 14-7 15 0M19 14c-2 8-13 7-15 1" fill="none" stroke="#c8c8c8" stroke-width="2.200"/><circle cx="17" cy="17" r="5.500" fill="#f0f0f0" stroke="#c4c4c4" stroke-width="1.500"/><path d="M14.500 14.500l5 5M19.500 14.500l-5 5" stroke="#c4c4c4" stroke-width="1.500"/></svg>
<svg style="left:1337px;top:116px;" width="24" height="24" viewBox="0 0 24 24"><rect x="3" y="2" width="12" height="15" fill="#a8a8a8"/><rect x="4.500" y="4" width="6" height="4" fill="#d8d8d8"/><path d="M2 22l3-5h10l3 5M7 17v5M12 17v5" stroke="#a8a8a8" stroke-width="1.600" fill="none"/></svg>
<svg style="left:1371px;top:116px;" width="24" height="24" viewBox="0 0 24 24"><rect x="3" y="2" width="12" height="15" fill="#a8a8a8"/><rect x="4.500" y="4" width="6" height="4" fill="#d8d8d8"/><path d="M2 22l3-5h10l3 5M7 17v5M12 17v5" stroke="#a8a8a8" stroke-width="1.600" fill="none"/><path d="M14 4c5-2 9 2 8 6" fill="none" stroke="#bbb" stroke-width="2"/></svg>
<svg style="left:1404px;top:116px;" width="24" height="24" viewBox="0 0 24 24"><path d="M1.500 1.500h8l4 4v11h-12z" fill="#fff" stroke="#c8c8c8" stroke-width="1.200"/><path d="M4 7h6M4 10h6M4 13h6" stroke="#d8d8d8" stroke-width="1.200"/><path d="M10.500 8.500h8l4 4v10h-12z" fill="#fff" stroke="#c8c8c8" stroke-width="1.200"/><path d="M13 14h7M13 17h7M13 20h7" stroke="#d8d8d8" stroke-width="1.200"/></svg>
<svg style="left:1437px;top:116px;" width="24" height="24" viewBox="0 0 24 24"><rect x="2" y="3" width="14" height="17" fill="#c4c4c4"/><path d="M9.500 8.500h9l4 4v10h-13z" fill="#f4f4f4" stroke="#c4c4c4" stroke-width="1.200"/><path d="M12 14h8M12 17h8M12 20h8" stroke="#d0d0d0" stroke-width="1.200"/></svg>
<svg style="left:1470px;top:116px;" width="24" height="24" viewBox="0 0 24 24"><rect x="1" y="2" width="22" height="20" fill="#b8b8b8"/><text x="12" y="19" font-family="Liberation Sans,sans-serif" font-size="10" font-weight="bold" fill="#e8e8e8" text-anchor="middle">KL</text></svg>
<svg style="left:1515px;top:116px;" width="24" height="24" viewBox="0 0 24 24"><path d="M3 2c4-2 8 1 7 5l11 11c1.500 1.500-1.500 4.500-3 3l-11-11c-4 1-7-3-5-7l3.500 3.500l3-1l1-3z" fill="#555"/></svg>
<div style="left:1543px;top:112px;width:34px;height:33px;background:#cfe4f7;border:1px solid #3a8ee6;"></div>
<svg style="left:1549px;top:116px;" width="24" height="24" viewBox="0 0 24 24"><rect x="8" y="6" width="14" height="17" fill="#4a4a4a"/><rect x="10" y="8" width="8" height="6" fill="#5fd06a"/><rect x="2" y="1" width="2.500" height="9" fill="#3a3"/><rect x="6" y="1" width="2.500" height="9" fill="#e03a3a"/><path d="M4 12v9M1 18l3 3l3-3M9 15v6" stroke="#e03a3a" stroke-width="1.400" fill="none"/><rect x="13" y="17" width="3" height="3" fill="#f0a030"/></svg>
<svg style="left:1593px;top:116px;" width="24" height="24" viewBox="0 0 24 24"><circle cx="12" cy="12" r="11.500" fill="#3a7fd0"/><text x="12" y="18.500" font-family="Liberation Sans,sans-serif" font-size="19" font-weight="bold" fill="#fff" text-anchor="middle">?</text></svg>
<div style="left:864px;top:149px;width:542px;height:486px;background:#f0f0f0;border-left:2px solid #a0a0a0;"></div>
<div class="canvas" style="left:866px;top:149px;width:540px;height:460px;background:#0046ad;border-left:1px solid #4a6aa0;border-top:1px solid #8a8a8a;overflow:hidden;"></div>
<div style="left:867px;top:150px;width:539px;height:1px;background:#1a3f8a;"></div>
<div class="tt" style="left:861px;top:196px;line-height:22px;clip-path:inset(0 0 0 6px);"><span class="lm" style="font-size:15.0px">37mm</span></div>
<div class="tt" style="left:862px;top:216px;line-height:22px;clip-path:inset(0 0 0 5px);"><span class="lm" style="font-size:15.0px">0mm</span></div>
<div class="tt" style="left:862px;top:235px;line-height:22px;clip-path:inset(0 0 0 5px);"><span class="lm" style="font-size:15.0px">7mm</span></div>
<div class="tt" style="left:862px;top:254px;line-height:22px;clip-path:inset(0 0 0 5px);"><span class="cj">流</span><span class="lm" style="font-size:15.0px">:  730mA</span></div>
<div class="tt" style="left:871px;top:273px;line-height:22px;clip-path:inset(0 0 0 0px);"><span class="lm" style="font-size:15.0px">780g</span></div>
<div style="left:1058px;top:174px;height:22px;font-size:16px;line-height:22px;color:#fff;white-space:pre;font-family:'Liberation Sans',sans-serif;width:20px;text-align:center;">0</div>
<div style="left:1157px;top:174px;height:22px;font-size:16px;line-height:22px;color:#fff;white-space:pre;font-family:'Liberation Sans',sans-serif;width:20px;text-align:center;">1</div>
<div style="left:1212px;top:174px;height:22px;font-size:16px;line-height:22px;color:#fff;white-space:pre;font-family:'Liberation Sans',sans-serif;width:20px;text-align:center;">2</div>
<div style="left:1273px;top:174px;height:22px;font-size:16px;line-height:22px;color:#fff;white-space:pre;font-family:'Liberation Sans',sans-serif;width:20px;text-align:center;">3</div>
<div style="left:1327px;top:196px;width:78px;height:164px;border-left:1px solid #16233f;border-top:1px solid #16233f;border-bottom:2px solid #4a88cc;"></div>
<div style="left:998px;top:463px;width:110px;height:146px;border-left:1px solid #16233f;border-top:1px solid #16233f;border-right:1px solid #4f8fd8;"></div>
<svg style="left:997px;top:196px;overflow:visible" width="329" height="164" viewBox="0 0 329 164"><path d="M0 14L8 0H14V162H8L0 148Z" fill="#3a3a3a" stroke="#1a1a1a"/><path d="M329 14L321 0H317V162H321L329 148Z" fill="#2a2a2a" stroke="#1a1a1a"/><rect x="12" y="0" width="306" height="162" fill="#1c1c1c"/><rect x="12" y="0" width="100" height="162" fill="#3c3c3c" stroke="#1c1c1c"/><rect x="15.5" y="3.5" width="94" height="65" fill="#000" stroke="#d2ceb4" stroke-width="1"/><rect x="22" y="11" width="68" height="46" fill="#1a1a1a" stroke="#b4a688" stroke-width="1"/><defs><linearGradient id="lcd" x1="0" y1="0" x2="1" y2="1"><stop offset="0" stop-color="#5a9a4a"/><stop offset=".5" stop-color="#1f6a1f"/><stop offset="1" stop-color="#0f4a12"/></linearGradient></defs><rect x="29" y="15" width="54" height="37.5" fill="url(#lcd)"/><rect x="94.0" y="8.0" width="2" height="2" fill="#3a3030"/><rect x="98.7" y="8.0" width="2" height="2" fill="#3c3c3c"/><rect x="103.4" y="8.0" width="2" height="2" fill="#3a3030"/><rect x="94.0" y="13.5" width="2" height="2" fill="#3a3030"/><rect x="98.7" y="13.5" width="2" height="2" fill="#3c3c3c"/><rect x="103.4" y="13.5" width="2" height="2" fill="#3a3030"/><rect x="94.0" y="19.0" width="2" height="2" fill="#3a3030"/><rect x="98.7" y="19.0" width="2" height="2" fill="#3c3c3c"/><rect x="103.4" y="19.0" width="2" height="2" fill="#3a3030"/><rect x="94.0" y="24.5" width="2" height="2" fill="#3a3030"/><rect x="98.7" y="24.5" width="2" height="2" fill="#3c3c3c"/><rect x="103.4" y="24.5" width="2" height="2" fill="#3a3030"/><rect x="94.0" y="30.0" width="2" height="2" fill="#3a3030"/><rect x="98.7" y="30.0" width="2" height="2" fill="#3c3c3c"/><rect x="103.4" y="30.0" width="2" height="2" fill="#9a1414"/><rect x="94.0" y="35.5" width="2" height="2" fill="#9a1414"/><rect x="98.7" y="35.5" width="2" height="2" fill="#3c3c3c"/><rect x="103.4" y="35.5" width="2" height="2" fill="#3a3030"/><rect x="94.0" y="41.0" width="2" height="2" fill="#3a3030"/><rect x="98.7" y="41.0" width="2" height="2" fill="#3c3c3c"/><rect x="103.4" y="41.0" width="2" height="2" fill="#3a3030"/><rect x="94.0" y="46.5" width="2" height="2" fill="#3a3030"/><rect x="98.7" y="46.5" width="2" height="2" fill="#3c3c3c"/><rect x="103.4" y="46.5" width="2" height="2" fill="#3a3030"/><rect x="94.0" y="52.0" width="2" height="2" fill="#9a1414"/><rect x="98.7" y="52.0" width="2" height="2" fill="#3c3c3c"/><rect x="103.4" y="52.0" width="2" height="2" fill="#3a3030"/><rect x="94.0" y="57.5" width="2" height="2" fill="#3a3030"/><rect x="98.7" y="57.5" width="2" height="2" fill="#3c3c3c"/><rect x="103.4" y="57.5" width="2" height="2" fill="#3a3030"/><rect x="36.0" y="62" width="2" height="3" fill="#b8b090"/><rect x="39.6" y="62" width="2" height="3" fill="#b8b090"/><rect x="43.2" y="62" width="2" height="3" fill="#b8b090"/><rect x="46.8" y="62" width="2" height="3" fill="#b8b090"/><rect x="50.4" y="62" width="2" height="3" fill="#b8b090"/><rect x="54.0" y="62" width="2" height="3" fill="#b8b090"/><rect x="57.6" y="62" width="2" height="3" fill="#b8b090"/><rect x="61.2" y="62" width="2" height="3" fill="#b8b090"/><rect x="64.8" y="62" width="2" height="3" fill="#b8b090"/><rect x="68.4" y="62" width="2" height="3" fill="#b8b090"/><rect x="72.0" y="62" width="2" height="3" fill="#b8b090"/><rect x="75.6" y="62" width="2" height="3" fill="#b8b090"/><rect x="79.2" y="62" width="2" height="3" fill="#b8b090"/><rect x="82.80000000000001" y="62" width="2" height="3" fill="#b8b090"/><rect x="17.0" y="5" width="3.5" height="3" fill="#ddd"/><rect x="21.5" y="5" width="3.5" height="3" fill="#ddd"/><rect x="26.0" y="5" width="3.5" height="3" fill="#ddd"/><rect x="30.5" y="5" width="3.5" height="3" fill="#ddd"/><rect x="76.0" y="6" width="2.5" height="2" fill="#ccc"/><rect x="79.5" y="6" width="2.5" height="2" fill="#ccc"/><rect x="83.0" y="6" width="2.5" height="2" fill="#ccc"/><rect x="18" y="63" width="3" height="3" fill="#3c3"/><rect x="13" y="72" width="26" height="24" fill="#333" stroke="#555"/><rect x="13" y="98" width="26" height="63" fill="#333" stroke="#555"/><rect x="33" y="72" width="5" height="24" fill="#555"/><rect x="33" y="98" width="5" height="26" fill="#555"/><rect x="40" y="72" width="6" height="90" fill="#222"/><rect x="47" y="72" width="64" height="89" fill="#3a3a3a" stroke="#555"/><circle cx="59" cy="83" r="7.500" fill="#0c0c0c" stroke="#666"/><circle cx="59" cy="83" r="2.500" fill="none" stroke="#667" stroke-width="1"/><circle cx="78" cy="83" r="7.500" fill="#0c0c0c" stroke="#666"/><circle cx="78" cy="83" r="2.500" fill="none" stroke="#667" stroke-width="1"/><circle cx="59" cy="103" r="7.500" fill="#0c0c0c" stroke="#666"/><circle cx="59" cy="103" r="2.500" fill="none" stroke="#667" stroke-width="1"/><circle cx="78" cy="103" r="7.500" fill="#0c0c0c" stroke="#666"/><circle cx="78" cy="103" r="2.500" fill="none" stroke="#667" stroke-width="1"/><circle cx="97" cy="103" r="7.500" fill="#0c0c0c" stroke="#666"/><circle cx="97" cy="103" r="2.500" fill="none" stroke="#667" stroke-width="1"/><rect x="69" y="118" width="5" height="3" fill="#e22"/><rect x="90" y="118" width="5" height="3" fill="#3c3"/><rect x="105" y="118" width="5" height="3" fill="#3c3"/><rect x="53" y="125" width="25" height="36" fill="#3a3a3a" stroke="#888"/><rect x="85" y="125" width="25" height="34" fill="#888" stroke="#aaa"/><rect x="88" y="129" width="18" height="26" fill="#111"/><rect x="98" y="131" width="10" height="2" fill="#999"/><rect x="98" y="136" width="10" height="2" fill="#999"/><rect x="98" y="141" width="10" height="2" fill="#999"/><rect x="98" y="146" width="10" height="2" fill="#999"/><rect x="98" y="151" width="10" height="2" fill="#999"/><rect x="113" y="0" width="29" height="162" fill="#3a3a3a" stroke="#1c1c1c"/><rect x="113" y="8.5" width="29" height="2.5" fill="#181818"/><rect x="113" y="12" width="29" height="1.5" fill="#707070"/><rect x="118" y="23" width="15" height="134" fill="#1e1e1e" stroke="#111"/><rect x="121" y="26" width="9" height="8" fill="#f4f0c0"/><rect x="121" y="36" width="9" height="6" fill="#d8d4a0"/><rect x="121" y="138" width="9" height="6" fill="#d8d4a0"/><rect x="121" y="146" width="9" height="9" fill="#f4f0c0"/><rect x="144" y="0" width="54" height="162" fill="#3a3a3a" stroke="#1c1c1c"/><rect x="144" y="8.5" width="54" height="2.5" fill="#181818"/><rect x="144" y="12" width="54" height="1.5" fill="#707070"/><path d="M160 13l3-4h16l3 4z" fill="#3a8a3a"/><rect x="160" y="25" width="5" height="2" fill="#3c3"/><rect x="167" y="25" width="5" height="2" fill="#3c3"/><rect x="179" y="25" width="5" height="2" fill="#3c3"/><rect x="151" y="84" width="7" height="14" fill="#ddd" stroke="#888"/><rect x="145" y="111" width="52" height="51" fill="#000"/><rect x="158" y="129" width="13" height="12" fill="#999" stroke="#ccc"/><path d="M161 132l7 6m0-6l-7 6" stroke="#333" stroke-width="1.200"/><rect x="172" y="129" width="13" height="12" fill="#999" stroke="#ccc"/><path d="M175 132l7 6m0-6l-7 6" stroke="#333" stroke-width="1.200"/><rect x="165" y="145" width="13" height="12" fill="#999" stroke="#ccc"/><path d="M168 148l7 6m0-6l-7 6" stroke="#333" stroke-width="1.200"/><rect x="199" y="0" width="55" height="162" fill="#3a3a3a" stroke="#1c1c1c"/><rect x="199" y="8.5" width="55" height="2.5" fill="#181818"/><rect x="199" y="12" width="55" height="1.5" fill="#707070"/><path d="M215 13l3-4h16l3 4z" fill="#3a8a3a"/><rect x="204" y="24" width="14" height="134" fill="#1e1e1e" stroke="#111"/><rect x="207" y="31" width="8" height="8" fill="#f4f0c0"/><rect x="207" y="41" width="8" height="6" fill="#d8d4a0"/><rect x="207" y="138" width="8" height="6" fill="#d8d4a0"/><rect x="207" y="146" width="8" height="9" fill="#f4f0c0"/><rect x="208" y="50.0" width="2" height="2" fill="#777"/><rect x="212" y="50.0" width="2" height="2" fill="#777"/><rect x="208" y="54.5" width="2" height="2" fill="#777"/><rect x="212" y="54.5" width="2" height="2" fill="#777"/><rect x="208" y="59.0" width="2" height="2" fill="#777"/><rect x="212" y="59.0" width="2" height="2" fill="#777"/><rect x="208" y="63.5" width="2" height="2" fill="#777"/><rect x="212" y="63.5" width="2" height="2" fill="#777"/><rect x="208" y="68.0" width="2" height="2" fill="#777"/><rect x="212" y="68.0" width="2" height="2" fill="#777"/><rect x="208" y="72.5" width="2" height="2" fill="#777"/><rect x="212" y="72.5" width="2" height="2" fill="#777"/><rect x="208" y="77.0" width="2" height="2" fill="#777"/><rect x="212" y="77.0" width="2" height="2" fill="#777"/><rect x="208" y="81.5" width="2" height="2" fill="#777"/><rect x="212" y="81.5" width="2" height="2" fill="#777"/><rect x="208" y="86.0" width="2" height="2" fill="#777"/><rect x="212" y="86.0" width="2" height="2" fill="#777"/><rect x="208" y="90.5" width="2" height="2" fill="#777"/><rect x="212" y="90.5" width="2" height="2" fill="#777"/><rect x="208" y="95.0" width="2" height="2" fill="#777"/><rect x="212" y="95.0" width="2" height="2" fill="#777"/><rect x="208" y="99.5" width="2" height="2" fill="#777"/><rect x="212" y="99.5" width="2" height="2" fill="#777"/><rect x="208" y="104.0" width="2" height="2" fill="#777"/><rect x="212" y="104.0" width="2" height="2" fill="#777"/><rect x="208" y="108.5" width="2" height="2" fill="#777"/><rect x="212" y="108.5" width="2" height="2" fill="#777"/><rect x="208" y="113.0" width="2" height="2" fill="#777"/><rect x="212" y="113.0" width="2" height="2" fill="#777"/><rect x="208" y="117.5" width="2" height="2" fill="#777"/><rect x="212" y="117.5" width="2" height="2" fill="#777"/><rect x="208" y="122.0" width="2" height="2" fill="#777"/><rect x="212" y="122.0" width="2" height="2" fill="#777"/><rect x="208" y="126.5" width="2" height="2" fill="#777"/><rect x="212" y="126.5" width="2" height="2" fill="#777"/><rect x="208" y="131.0" width="2" height="2" fill="#777"/><rect x="212" y="131.0" width="2" height="2" fill="#777"/><rect x="226" y="24" width="27" height="137" fill="#333" stroke="#4a4a4a"/><rect x="238" y="40" width="4" height="2" fill="#3c3"/><rect x="238" y="52" width="4" height="2" fill="#3c3"/><rect x="227" y="108" width="12" height="4" fill="#111"/><rect x="255" y="0" width="63" height="162" fill="#3a3a3a"/><rect x="255" y="8.5" width="63" height="2.5" fill="#181818"/><rect x="255" y="12" width="63" height="1.5" fill="#707070"/><path d="M274 13l3-4h16l3 4z" fill="#3a8a3a"/><rect x="273.0" y="25" width="4" height="2" fill="#3c3"/><rect x="279.5" y="25" width="4" height="2" fill="#3c3"/><rect x="286.0" y="25" width="4" height="2" fill="#3c3"/><rect x="292.5" y="25" width="4" height="2" fill="#3c3"/><rect x="273.0" y="31" width="4" height="2" fill="#3c3"/><rect x="279.5" y="31" width="4" height="2" fill="#3c3"/><rect x="302" y="22" width="6" height="14" fill="#ddd" stroke="#888"/><rect x="277" y="46" width="25" height="57" fill="#c8c8c8" stroke="#eee"/><circle cx="290" cy="54" r="4.500" fill="#111" stroke="#666"/><circle cx="290" cy="96" r="4.500" fill="#111" stroke="#666"/><rect x="284" y="62" width="12" height="26" rx="3" fill="#222" stroke="#555"/><rect x="263" y="108" width="46" height="54" fill="#000"/><rect x="264" y="111" width="13" height="12" fill="#999" stroke="#ccc"/><path d="M267 114l7 6m0-6l-7 6" stroke="#333" stroke-width="1.200"/><rect x="278" y="111" width="13" height="12" fill="#999" stroke="#ccc"/><path d="M281 114l7 6m0-6l-7 6" stroke="#333" stroke-width="1.200"/><rect x="292" y="111" width="13" height="12" fill="#999" stroke="#ccc"/><path d="M295 114l7 6m0-6l-7 6" stroke="#333" stroke-width="1.200"/><rect x="271" y="126" width="13" height="12" fill="#999" stroke="#ccc"/><path d="M274 129l7 6m0-6l-7 6" stroke="#333" stroke-width="1.200"/><rect x="286" y="126" width="13" height="12" fill="#999" stroke="#ccc"/><path d="M289 129l7 6m0-6l-7 6" stroke="#333" stroke-width="1.200"/><rect x="254.500" y="0.500" width="64" height="162" fill="none" stroke="#1fc8e0" stroke-width="1.800"/><path d="M9 1H320" stroke="#6c6c6c" stroke-width="1"/></svg>
<div style="left:1405px;top:151px;width:24px;height:458px;background:#f0f0f0;"></div>
<div style="left:1407px;top:176px;width:21px;height:349px;background:#cdcdcd;"></div>
<svg style="left:1409px;top:159px;" width="16" height="10" viewBox="0 0 16 10"><path d="M2 8.500l6-6l6 6" stroke="#555" stroke-width="3" fill="none"/></svg>
<svg style="left:1409px;top:591px;" width="16" height="10" viewBox="0 0 16 10"><path d="M2 1.500l6 6l6-6" stroke="#555" stroke-width="3" fill="none"/></svg>
<div style="left:867px;top:609px;width:538px;height:26px;background:#f0f0f0;"></div>
<div style="left:938px;top:611px;width:376px;height:22px;background:#cdcdcd;"></div>
<svg style="left:874px;top:613px;" width="10" height="16" viewBox="0 0 10 16"><path d="M8.500 2l-6 6l6 6" stroke="#555" stroke-width="3" fill="none"/></svg>
<svg style="left:1386px;top:613px;" width="10" height="16" viewBox="0 0 10 16"><path d="M1.500 2l6 6l-6 6" stroke="#555" stroke-width="3" fill="none"/></svg>
<div style="left:1429px;top:150px;width:10px;height:486px;background:#f0f0f0;"></div>
<div style="left:1439px;top:150px;width:449px;height:35px;background:#f0f0f0;border:1px solid #a8a8a8;border-radius:2px;"></div>
<div style="left:1445px;top:149px;height:35px;font-size:18.5px;line-height:35px;color:#000;white-space:pre;">单元</div>
<svg style="left:1868px;top:162px;" width="13" height="14" viewBox="0 0 13 14"><path d="M2.500 1h7.500v8.500h-7.500z" fill="none" stroke="#000" stroke-width="1.500"/><rect x="7" y="1" width="3" height="8.500" fill="#000"/><path d="M0.500 9.800h11.500" stroke="#000" stroke-width="1.800"/><path d="M6.200 10v3.800" stroke="#000" stroke-width="1.600"/></svg>
<div style="left:1439px;top:192px;width:138px;height:31px;background:#f4f4f4;"></div>
<div style="left:1577px;top:192px;width:131px;height:31px;background:#f7f7f7;"></div>
<div style="left:1451px;top:191px;height:30px;font-size:18.5px;line-height:30px;color:#8c8c8c;white-space:pre;">选择单元(<u>1</u>)</div>
<div style="left:1585px;top:191px;height:30px;font-size:18.5px;line-height:30px;color:#000;white-space:pre;">设定单元(<u>2</u>)</div>
<div style="left:1707px;top:193px;width:2px;height:29px;background:#000;"></div>
<div style="left:1439px;top:223px;width:449px;height:413px;border:1px solid #a8a8a8;border-top:2px solid #b4b4b4;background:#f0f0f0;"></div>
<svg style="left:1447px;top:232px;" width="26" height="24" viewBox="0 0 26 24"><rect x="0.500" y="0.500" width="7" height="7" fill="#fff" stroke="#888"/><path d="M2 4h4" stroke="#555"/><path d="M4 8v4h4M12 3h11M14 8h8M14 8v12M14 14h7M14 20h8" stroke="#777" stroke-width="1.400" fill="none"/><path d="M4 12v9M1 18l3 3.500l3-3.500" stroke="#2a6fd0" stroke-width="1.600" fill="none"/></svg>
<svg style="left:1482px;top:232px;" width="26" height="24" viewBox="0 0 26 24"><rect x="0.500" y="0.500" width="7" height="7" fill="#fff" stroke="#888"/><path d="M2 4h4M4 2v4" stroke="#555"/><path d="M11 3h11M11 7.500h11" stroke="#777" stroke-width="1.400" fill="none"/><path d="M5 23v-10M2 16l3-3.500l3 3.500" stroke="#2a6fd0" stroke-width="1.600" fill="none"/></svg>
<svg style="left:1516px;top:231px;" width="26" height="26" viewBox="0 0 26 26"><rect x="0" y="0" width="12" height="14" fill="#555"/><rect x="1" y="2" width="4" height="5" fill="#5fd06a"/><rect x="6" y="2" width="4" height="5" fill="#a070d0"/><rect x="6" y="6" width="17" height="14" fill="#fff" stroke="#555" stroke-width="1.200"/><text x="14.500" y="17" font-family="Liberation Sans,sans-serif" font-size="10" font-weight="bold" fill="#444" text-anchor="middle">PS</text><rect x="14" y="18" width="10" height="7" fill="#7a7a3a"/></svg>
<div class="tt" style="left:1779px;top:233px;color:#000;"><span class="lm" style="font-size:15.0px">[3] KV-L2*V</span></div>
<div class="pg" style="left:1443px;top:262px;width:415px;height:246px;background:#fff;overflow:hidden;"></div>
<div style="left:1443px;top:262px;width:24px;height:246px;background:#d4d2ca;"></div>
<div style="left:1443px;top:262px;width:415px;height:29px;background:#d4d2ca;"></div>
<svg style="left:1450px;top:270px;" width="13" height="13" viewBox="0 0 13 13"><rect x="0.500" y="0.500" width="12" height="12" fill="none" stroke="#555"/><path d="M3 6.500h7" stroke="#333"/></svg>
<div class="pt bd" style="left:1471px;top:262px;height:29px;line-height:29px;font-weight:bold;color:#000;"><span class="cj">基本</span></div>
<div style="left:1467px;top:291px;width:194px;height:28px;background:#dcdcdc;"></div>
<div style="left:1467px;top:319px;width:391px;height:1px;background:#d4d2ca;"></div>
<div class="pt" style="left:1476px;top:291px;height:29px;line-height:29px;color:#000;overflow:hidden;"><span class="cj">首</span><span class="lm" style="font-size:15.0px"> DM </span><span class="cj">编号</span></div>
<div class="pt" style="left:1670px;top:291px;height:29px;line-height:27px;color:#000;overflow:hidden;"><span class="lm" style="font-size:15.0px">DM10900</span></div>
<div style="left:1467px;top:347px;width:391px;height:1px;background:#d4d2ca;"></div>
<div class="pt" style="left:1476px;top:320px;height:28px;line-height:28px;color:#8c8c8c;overflow:hidden;"><span class="cj">占用</span><span class="lm" style="font-size:15.0px"> DM </span><span class="cj">数</span></div>
<div class="pt" style="left:1670px;top:320px;height:28px;line-height:26px;color:#8c8c8c;overflow:hidden;"><span class="lm" style="font-size:15.0px">1</span></div>
<div style="left:1467px;top:376px;width:391px;height:1px;background:#d4d2ca;"></div>
<div class="pt" style="left:1476px;top:348px;height:29px;line-height:29px;color:#000;overflow:hidden;"><span class="cj">首继电器编号</span><span class="lm" style="font-size:15.0px">(</span><span class="cj">按</span><span class="lm" style="font-size:15.0px">...</span></div>
<div class="pt" style="left:1670px;top:348px;height:29px;line-height:27px;color:#000;overflow:hidden;"><span class="lm" style="font-size:15.0px">R44000</span></div>
<div style="left:1467px;top:404px;width:391px;height:1px;background:#d4d2ca;"></div>
<div class="pt" style="left:1476px;top:377px;height:28px;line-height:28px;color:#8c8c8c;overflow:hidden;"><span class="cj">占用继电器数</span></div>
<div class="pt" style="left:1670px;top:377px;height:28px;line-height:26px;color:#8c8c8c;overflow:hidden;"><span class="lm" style="font-size:15.0px">32</span></div>
<div style="left:1467px;top:432px;width:391px;height:1px;background:#d4d2ca;"></div>
<div class="pt" style="left:1476px;top:405px;height:28px;line-height:28px;color:#000;overflow:hidden;"><span class="cj">站号</span></div>
<div class="pt" style="left:1670px;top:405px;height:28px;line-height:26px;color:#000;overflow:hidden;"><span class="lm" style="font-size:15.0px">0(*)</span></div>
<div style="left:1443px;top:433px;width:415px;height:30px;background:#d4d2ca;"></div>
<svg style="left:1450px;top:441px;" width="13" height="13" viewBox="0 0 13 13"><rect x="0.500" y="0.500" width="12" height="12" fill="none" stroke="#555"/><path d="M3 6.500h7" stroke="#333"/></svg>
<div class="pt bd" style="left:1471px;top:433px;height:30px;line-height:30px;font-weight:bold;color:#000;"><span class="cj">端口</span><span class="lm" style="font-size:15.0px"> 1</span></div>
<div style="left:1467px;top:490px;width:391px;height:1px;background:#d4d2ca;"></div>
<div class="pt" style="left:1476px;top:463px;height:28px;line-height:28px;color:#000;overflow:hidden;"><span class="cj">动作模式</span></div>
<div class="pt" style="left:1670px;top:463px;height:28px;line-height:26px;color:#000;overflow:hidden;"><span class="lm" style="font-size:15.0px">KV BUILDER/KV ST...</span></div>
<div style="left:1467px;top:507px;width:391px;height:1px;background:#d4d2ca;"></div>
<div class="pt" style="left:1476px;top:491px;height:17px;line-height:29px;color:#8c8c8c;overflow:hidden;"><span class="cj">详细</span></div>
<div class="pt" style="left:1670px;top:491px;height:17px;line-height:27px;color:#8c8c8c;overflow:hidden;"><span class="cj">——</span><span class="lm" style="font-size:15.0px">(*)</span></div>
<div style="left:1661px;top:291px;width:1px;height:217px;background:#d4d2ca;"></div>
<div style="left:1859px;top:262px;width:25px;height:246px;background:#f0f0f0;"></div>
<div style="left:1861px;top:288px;width:22px;height:52px;background:#cdcdcd;"></div>
<svg style="left:1864px;top:270px;" width="16" height="10" viewBox="0 0 16 10"><path d="M2 8.500l6-6l6 6" stroke="#555" stroke-width="3" fill="none"/></svg>
<svg style="left:1864px;top:491px;" width="16" height="10" viewBox="0 0 16 10"><path d="M2 1.500l6 6l6-6" stroke="#555" stroke-width="3" fill="none"/></svg>
<div style="left:1443px;top:515px;width:441px;height:118px;border-top:1px solid #b4b4b4;border-right:1px solid #fafafa;border-bottom:1px solid #fafafa;background:#f0f0f0;"></div>
<div class="pt bd" style="left:1453px;top:518px;line-height:22px;font-weight:bold;color:#000;"><span class="cj">首</span><span class="lm" style="font-size:15.0px"> DM </span><span class="cj">编号</span></div>
<div class="pt" style="left:1453px;top:539px;line-height:22px;color:#000;"><span class="cj">设定分配到该单元的数据存储器</span><span class="lm" style="font-size:15.0px">(DM)</span><span class="cj">的首编号。</span></div>
<div style="left:864px;top:636px;width:1025px;height:8px;background:#f9f9f9;"></div>
<div style="left:864px;top:644px;width:1025px;height:36px;background:#f0f0f0;border-top:1px solid #c0c0c0;border-bottom:1px solid #b4b4b4;"></div>
<div style="left:864px;top:680px;width:1025px;height:6px;background:#f9f9f9;"></div>
<div style="left:864px;top:686px;width:1025px;height:2px;background:#a8a8a8;"></div>
<div style="left:870px;top:645px;height:36px;font-size:18.5px;line-height:36px;color:#000;white-space:pre;">消息</div>
<svg style="left:1868px;top:657px;" width="13" height="14" viewBox="0 0 13 14"><path d="M2.500 1h7.500v8.500h-7.500z" fill="none" stroke="#000" stroke-width="1.500"/><rect x="7" y="1" width="3" height="8.500" fill="#000"/><path d="M0.500 9.800h11.500" stroke="#000" stroke-width="1.800"/><path d="M6.200 10v3.800" stroke="#000" stroke-width="1.600"/></svg>
<div style="left:864px;top:688px;width:1025px;height:112px;background:#f0f0f0;"></div>
<div style="left:870px;top:690px;width:1016px;height:109px;background:#fff;border:2px solid #8c8c8c;border-right:1px solid #d8d8d8;border-bottom:none;"></div>
<div style="left:872px;top:692px;width:1009px;height:25px;background:#f0f0f0;border:1px solid #9a9a9a;"></div>
<div style="left:968px;top:693px;width:1px;height:23px;background:#9a9a9a;"></div>
<div style="left:1064px;top:693px;width:1px;height:23px;background:#9a9a9a;"></div>
<div style="left:1160px;top:693px;width:1px;height:23px;background:#9a9a9a;"></div>
<div style="left:1256px;top:693px;width:1px;height:23px;background:#9a9a9a;"></div>
<div style="left:1352px;top:693px;width:1px;height:23px;background:#9a9a9a;"></div>
<div style="left:1448px;top:693px;width:1px;height:23px;background:#9a9a9a;"></div>
<div style="left:968px;top:692px;height:25px;font-size:18.5px;line-height:25px;color:#000;white-space:pre;width:96px;text-align:center;">处理</div>
<div style="left:1064px;top:692px;height:25px;font-size:18.5px;line-height:25px;color:#000;white-space:pre;width:96px;text-align:center;">行</div>
<div style="left:1160px;top:692px;height:25px;font-size:18.5px;line-height:25px;color:#000;white-space:pre;width:96px;text-align:center;">编号</div>
<div style="left:1256px;top:692px;height:25px;font-size:18.5px;line-height:25px;color:#000;white-space:pre;width:96px;text-align:center;">代码</div>
<div style="left:1352px;top:692px;height:25px;font-size:18.5px;line-height:25px;color:#000;white-space:pre;width:96px;text-align:center;">消息</div>
<div style="left:866px;top:799px;width:1022px;height:2px;background:#222;"></div>
<svg style="left:872px;top:807px;" width="90" height="16" viewBox="0 0 90 16"><g fill="#111"><rect x="2" y="2" width="2" height="12"/><path d="M12 2v12l-7-6z"/><path d="M35 3v10l-6-5z"/><path d="M53 3v10l6-5z"/><path d="M74 2v12l7-6z"/><rect x="82" y="2" width="2" height="12"/></g></svg>
<svg style="left:966px;top:799px;" width="74" height="32" viewBox="0 0 74 32"><path d="M1 1l16 29.500h39l16-29.500" fill="#fff" stroke="#111" stroke-width="1.400"/><rect x="2" y="0" width="70" height="2" fill="#fff"/></svg>
<div style="left:966px;top:801px;height:28px;font-size:18.5px;line-height:28px;color:#000;white-space:pre;width:74px;text-align:center;font-weight:bold;">消息</div>
<div style="left:1394px;top:803px;width:7px;height:26px;background:#f4f4f4;border:1px solid #888;"></div>
<svg style="left:1408px;top:808px;" width="10" height="14" viewBox="0 0 10 14"><path d="M8 2l-5 5l5 5" stroke="#bdbdbd" stroke-width="2" fill="none"/></svg>
<svg style="left:1840px;top:808px;" width="10" height="14" viewBox="0 0 10 14"><path d="M2 2l5 5l-5 5" stroke="#bdbdbd" stroke-width="2" fill="none"/></svg>
<div style="left:1308px;top:838px;width:96px;height:31px;background:#f0f0f0;border:1px solid #b0b0b0;"></div>
<div style="left:1312px;top:840px;height:31px;font-size:17.5px;line-height:31px;color:#000;white-space:pre;font-family:'Liberation Mono','Noto Sans CJK SC',monospace;">编辑器</div>
<div style="left:1408px;top:838px;width:125px;height:31px;background:#f0f0f0;border:1px solid #b0b0b0;"></div>
<div style="left:1411px;top:839px;height:31px;font-size:18px;line-height:31px;color:#000;white-space:pre;">1 行,  4 列</div>
<div style="left:1538px;top:839px;width:101px;height:29px;background:#e1e1e1;border:1px solid #adadad;"></div>
<div style="left:1538px;top:839px;height:29px;font-size:18.5px;line-height:29px;color:#000;white-space:pre;width:101px;text-align:center;">OK</div>
<div style="left:1645px;top:839px;width:101px;height:29px;background:#e1e1e1;border:1px solid #adadad;"></div>
<div style="left:1645px;top:839px;height:29px;font-size:18.5px;line-height:29px;color:#000;white-space:pre;width:101px;text-align:center;">取消</div>
<div style="left:1751px;top:839px;width:101px;height:29px;background:#cccccc;border:1px solid #bfbfbf;"></div>
<div style="left:1751px;top:839px;height:29px;font-size:18.5px;line-height:29px;color:#8c8c8c;white-space:pre;width:101px;text-align:center;">应用</div>
<div style="left:1857px;top:838px;width:6px;height:31px;background:#f4f4f4;border:1px solid #b0b0b0;"></div>
<svg style="left:1868px;top:850px;" width="20" height="19" viewBox="0 0 20 19"><path d="M1 19l18-18M7 19l12-12M13 19l6-6" stroke="#c0c0c0" stroke-width="1.300"/></svg>
</body></html>
